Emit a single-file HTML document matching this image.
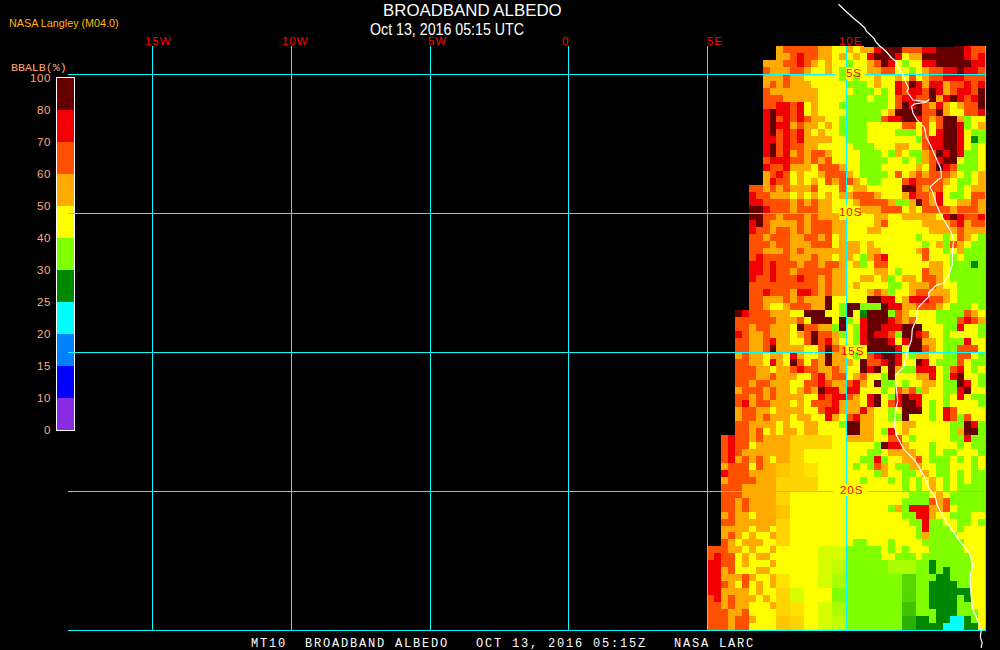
<!DOCTYPE html>
<html><head><meta charset="utf-8">
<style>
html,body{margin:0;padding:0;background:#000;}
body{width:1000px;height:650px;overflow:hidden;position:relative;font-family:"Liberation Sans",sans-serif;}
.t{position:absolute;white-space:pre;line-height:1;}
.m{font-family:"Liberation Mono",monospace;}
svg{position:absolute;left:0;top:0;}
</style></head><body>
<svg width="1000" height="650" viewBox="0 0 1000 650" shape-rendering="crispEdges">
<rect x="776" y="46" width="7" height="7" fill="#ffaa00"/>
<rect x="783" y="46" width="35" height="7" fill="#ff5000"/>
<rect x="818" y="46" width="14" height="7" fill="#ffaa00"/>
<rect x="832" y="46" width="14" height="7" fill="#ffff00"/>
<rect x="846" y="46" width="7" height="7" fill="#ffaa00"/>
<rect x="853" y="46" width="7" height="7" fill="#ffff00"/>
<rect x="860" y="46" width="14" height="7" fill="#ffaa00"/>
<rect x="874" y="46" width="7" height="7" fill="#f00000"/>
<rect x="881" y="46" width="21" height="7" fill="#660000"/>
<rect x="902" y="46" width="20" height="7" fill="#ff5000"/>
<rect x="922" y="46" width="14" height="7" fill="#f00000"/>
<rect x="936" y="46" width="28" height="7" fill="#660000"/>
<rect x="964" y="46" width="7" height="7" fill="#f00000"/>
<rect x="971" y="46" width="14" height="7" fill="#ff5000"/>
<rect x="776" y="53" width="14" height="7" fill="#ffaa00"/>
<rect x="790" y="53" width="7" height="7" fill="#ff5000"/>
<rect x="797" y="53" width="7" height="7" fill="#f00000"/>
<rect x="804" y="53" width="14" height="7" fill="#ff5000"/>
<rect x="818" y="53" width="14" height="7" fill="#ffaa00"/>
<rect x="832" y="53" width="7" height="7" fill="#ffff00"/>
<rect x="839" y="53" width="7" height="7" fill="#ffaa00"/>
<rect x="846" y="53" width="7" height="7" fill="#ffff00"/>
<rect x="853" y="53" width="7" height="7" fill="#ffaa00"/>
<rect x="860" y="53" width="7" height="7" fill="#ffff00"/>
<rect x="867" y="53" width="7" height="7" fill="#f00000"/>
<rect x="874" y="53" width="21" height="7" fill="#660000"/>
<rect x="895" y="53" width="7" height="7" fill="#f00000"/>
<rect x="902" y="53" width="7" height="7" fill="#ffff00"/>
<rect x="909" y="53" width="13" height="7" fill="#ffaa00"/>
<rect x="922" y="53" width="42" height="7" fill="#660000"/>
<rect x="964" y="53" width="7" height="7" fill="#f00000"/>
<rect x="971" y="53" width="7" height="7" fill="#ff5000"/>
<rect x="978" y="53" width="7" height="7" fill="#f00000"/>
<rect x="763" y="60" width="20" height="7" fill="#ffaa00"/>
<rect x="783" y="60" width="14" height="7" fill="#ff5000"/>
<rect x="797" y="60" width="7" height="7" fill="#f00000"/>
<rect x="804" y="60" width="7" height="7" fill="#ff5000"/>
<rect x="811" y="60" width="7" height="7" fill="#ffaa00"/>
<rect x="818" y="60" width="7" height="7" fill="#ffff00"/>
<rect x="825" y="60" width="7" height="7" fill="#ffaa00"/>
<rect x="832" y="60" width="14" height="7" fill="#ffff00"/>
<rect x="846" y="60" width="7" height="7" fill="#80ff00"/>
<rect x="853" y="60" width="14" height="7" fill="#ffff00"/>
<rect x="867" y="60" width="7" height="7" fill="#ffaa00"/>
<rect x="874" y="60" width="7" height="7" fill="#ff5000"/>
<rect x="881" y="60" width="7" height="7" fill="#660000"/>
<rect x="888" y="60" width="7" height="7" fill="#f00000"/>
<rect x="895" y="60" width="7" height="7" fill="#ffff00"/>
<rect x="902" y="60" width="7" height="7" fill="#80ff00"/>
<rect x="909" y="60" width="13" height="7" fill="#ffff00"/>
<rect x="922" y="60" width="14" height="7" fill="#f00000"/>
<rect x="936" y="60" width="35" height="7" fill="#660000"/>
<rect x="971" y="60" width="14" height="7" fill="#f00000"/>
<rect x="763" y="67" width="7" height="7" fill="#ff5000"/>
<rect x="770" y="67" width="20" height="7" fill="#ffaa00"/>
<rect x="790" y="67" width="14" height="7" fill="#ff5000"/>
<rect x="804" y="67" width="7" height="7" fill="#ffaa00"/>
<rect x="811" y="67" width="14" height="7" fill="#ffff00"/>
<rect x="825" y="67" width="7" height="7" fill="#ffaa00"/>
<rect x="832" y="67" width="7" height="7" fill="#ffff00"/>
<rect x="839" y="67" width="7" height="7" fill="#80ff00"/>
<rect x="846" y="67" width="21" height="7" fill="#ffff00"/>
<rect x="867" y="67" width="14" height="7" fill="#ffaa00"/>
<rect x="881" y="67" width="14" height="7" fill="#ff5000"/>
<rect x="895" y="67" width="14" height="7" fill="#ffff00"/>
<rect x="909" y="67" width="7" height="7" fill="#80ff00"/>
<rect x="916" y="67" width="6" height="7" fill="#ffff00"/>
<rect x="922" y="67" width="7" height="7" fill="#ffaa00"/>
<rect x="929" y="67" width="14" height="7" fill="#ff5000"/>
<rect x="943" y="67" width="14" height="7" fill="#f00000"/>
<rect x="957" y="67" width="7" height="7" fill="#660000"/>
<rect x="964" y="67" width="14" height="7" fill="#f00000"/>
<rect x="978" y="67" width="7" height="7" fill="#ff5000"/>
<rect x="763" y="74" width="20" height="7" fill="#ffaa00"/>
<rect x="783" y="74" width="7" height="7" fill="#ff5000"/>
<rect x="790" y="74" width="14" height="7" fill="#ffaa00"/>
<rect x="804" y="74" width="35" height="7" fill="#ffff00"/>
<rect x="839" y="74" width="7" height="7" fill="#80ff00"/>
<rect x="846" y="74" width="7" height="7" fill="#ffff00"/>
<rect x="853" y="74" width="7" height="7" fill="#80ff00"/>
<rect x="860" y="74" width="14" height="7" fill="#ffff00"/>
<rect x="874" y="74" width="7" height="7" fill="#ffaa00"/>
<rect x="881" y="74" width="14" height="7" fill="#ffff00"/>
<rect x="895" y="74" width="7" height="7" fill="#ffaa00"/>
<rect x="902" y="74" width="7" height="7" fill="#ffff00"/>
<rect x="909" y="74" width="7" height="7" fill="#ff5000"/>
<rect x="916" y="74" width="6" height="7" fill="#ffff00"/>
<rect x="922" y="74" width="7" height="7" fill="#ffaa00"/>
<rect x="929" y="74" width="14" height="7" fill="#ff5000"/>
<rect x="943" y="74" width="21" height="7" fill="#f00000"/>
<rect x="964" y="74" width="21" height="7" fill="#ff5000"/>
<rect x="763" y="81" width="7" height="7" fill="#ffaa00"/>
<rect x="770" y="81" width="6" height="7" fill="#ff5000"/>
<rect x="776" y="81" width="7" height="7" fill="#ffaa00"/>
<rect x="783" y="81" width="7" height="7" fill="#ff5000"/>
<rect x="790" y="81" width="21" height="7" fill="#ffaa00"/>
<rect x="811" y="81" width="35" height="7" fill="#ffff00"/>
<rect x="846" y="81" width="21" height="7" fill="#80ff00"/>
<rect x="867" y="81" width="7" height="7" fill="#ffff00"/>
<rect x="874" y="81" width="7" height="7" fill="#ffaa00"/>
<rect x="881" y="81" width="14" height="7" fill="#ffff00"/>
<rect x="895" y="81" width="7" height="7" fill="#f00000"/>
<rect x="902" y="81" width="7" height="7" fill="#ff5000"/>
<rect x="909" y="81" width="7" height="7" fill="#660000"/>
<rect x="916" y="81" width="6" height="7" fill="#f00000"/>
<rect x="922" y="81" width="7" height="7" fill="#ffaa00"/>
<rect x="929" y="81" width="14" height="7" fill="#f00000"/>
<rect x="943" y="81" width="7" height="7" fill="#ffaa00"/>
<rect x="950" y="81" width="14" height="7" fill="#ff5000"/>
<rect x="964" y="81" width="7" height="7" fill="#f00000"/>
<rect x="971" y="81" width="7" height="7" fill="#ff5000"/>
<rect x="978" y="81" width="7" height="7" fill="#f00000"/>
<rect x="763" y="88" width="7" height="7" fill="#ff5000"/>
<rect x="770" y="88" width="48" height="7" fill="#ffaa00"/>
<rect x="818" y="88" width="35" height="7" fill="#ffff00"/>
<rect x="853" y="88" width="21" height="7" fill="#80ff00"/>
<rect x="874" y="88" width="7" height="7" fill="#ffff00"/>
<rect x="881" y="88" width="7" height="7" fill="#80ff00"/>
<rect x="888" y="88" width="7" height="7" fill="#ffff00"/>
<rect x="895" y="88" width="7" height="7" fill="#f00000"/>
<rect x="902" y="88" width="7" height="7" fill="#ff5000"/>
<rect x="909" y="88" width="13" height="7" fill="#f00000"/>
<rect x="922" y="88" width="7" height="7" fill="#ff5000"/>
<rect x="929" y="88" width="7" height="7" fill="#660000"/>
<rect x="936" y="88" width="7" height="7" fill="#f00000"/>
<rect x="943" y="88" width="7" height="7" fill="#ffaa00"/>
<rect x="950" y="88" width="7" height="7" fill="#ff5000"/>
<rect x="957" y="88" width="14" height="7" fill="#f00000"/>
<rect x="971" y="88" width="7" height="7" fill="#ff5000"/>
<rect x="978" y="88" width="7" height="7" fill="#660000"/>
<rect x="763" y="95" width="20" height="7" fill="#ff5000"/>
<rect x="783" y="95" width="35" height="7" fill="#ffaa00"/>
<rect x="818" y="95" width="28" height="7" fill="#ffff00"/>
<rect x="846" y="95" width="21" height="7" fill="#80ff00"/>
<rect x="867" y="95" width="7" height="7" fill="#ffff00"/>
<rect x="874" y="95" width="14" height="7" fill="#80ff00"/>
<rect x="888" y="95" width="7" height="7" fill="#ffff00"/>
<rect x="895" y="95" width="7" height="7" fill="#ff5000"/>
<rect x="902" y="95" width="14" height="7" fill="#f00000"/>
<rect x="916" y="95" width="13" height="7" fill="#ff5000"/>
<rect x="929" y="95" width="7" height="7" fill="#660000"/>
<rect x="936" y="95" width="7" height="7" fill="#ffaa00"/>
<rect x="943" y="95" width="7" height="7" fill="#f00000"/>
<rect x="950" y="95" width="7" height="7" fill="#660000"/>
<rect x="957" y="95" width="7" height="7" fill="#f00000"/>
<rect x="964" y="95" width="7" height="7" fill="#ff5000"/>
<rect x="971" y="95" width="7" height="7" fill="#f00000"/>
<rect x="978" y="95" width="7" height="7" fill="#660000"/>
<rect x="763" y="102" width="13" height="7" fill="#ff5000"/>
<rect x="776" y="102" width="14" height="7" fill="#f00000"/>
<rect x="790" y="102" width="7" height="7" fill="#ff5000"/>
<rect x="797" y="102" width="7" height="7" fill="#f00000"/>
<rect x="804" y="102" width="7" height="7" fill="#ffff00"/>
<rect x="811" y="102" width="7" height="7" fill="#ffaa00"/>
<rect x="818" y="102" width="21" height="7" fill="#ffff00"/>
<rect x="839" y="102" width="49" height="7" fill="#80ff00"/>
<rect x="888" y="102" width="7" height="7" fill="#ffff00"/>
<rect x="895" y="102" width="7" height="7" fill="#ff5000"/>
<rect x="902" y="102" width="7" height="7" fill="#660000"/>
<rect x="909" y="102" width="7" height="7" fill="#f00000"/>
<rect x="916" y="102" width="6" height="7" fill="#660000"/>
<rect x="922" y="102" width="7" height="7" fill="#ff5000"/>
<rect x="929" y="102" width="7" height="7" fill="#ffaa00"/>
<rect x="936" y="102" width="7" height="7" fill="#f00000"/>
<rect x="943" y="102" width="7" height="7" fill="#ffaa00"/>
<rect x="950" y="102" width="7" height="7" fill="#ffff00"/>
<rect x="957" y="102" width="7" height="7" fill="#ffaa00"/>
<rect x="964" y="102" width="14" height="7" fill="#ff5000"/>
<rect x="978" y="102" width="7" height="7" fill="#660000"/>
<rect x="763" y="109" width="7" height="7" fill="#f00000"/>
<rect x="770" y="109" width="6" height="7" fill="#660000"/>
<rect x="776" y="109" width="14" height="7" fill="#f00000"/>
<rect x="790" y="109" width="7" height="7" fill="#ff5000"/>
<rect x="797" y="109" width="7" height="7" fill="#f00000"/>
<rect x="804" y="109" width="7" height="7" fill="#ffff00"/>
<rect x="811" y="109" width="7" height="7" fill="#ffaa00"/>
<rect x="818" y="109" width="28" height="7" fill="#ffff00"/>
<rect x="846" y="109" width="35" height="7" fill="#80ff00"/>
<rect x="881" y="109" width="7" height="7" fill="#ffff00"/>
<rect x="888" y="109" width="7" height="7" fill="#ffaa00"/>
<rect x="895" y="109" width="27" height="7" fill="#660000"/>
<rect x="922" y="109" width="14" height="7" fill="#ff5000"/>
<rect x="936" y="109" width="7" height="7" fill="#660000"/>
<rect x="943" y="109" width="7" height="7" fill="#ffaa00"/>
<rect x="950" y="109" width="14" height="7" fill="#ffff00"/>
<rect x="964" y="109" width="14" height="7" fill="#ff5000"/>
<rect x="978" y="109" width="7" height="7" fill="#f00000"/>
<rect x="763" y="116" width="7" height="6" fill="#f00000"/>
<rect x="770" y="116" width="6" height="6" fill="#660000"/>
<rect x="776" y="116" width="7" height="6" fill="#ff5000"/>
<rect x="783" y="116" width="7" height="6" fill="#f00000"/>
<rect x="790" y="116" width="7" height="6" fill="#ff5000"/>
<rect x="797" y="116" width="7" height="6" fill="#f00000"/>
<rect x="804" y="116" width="7" height="6" fill="#ff5000"/>
<rect x="811" y="116" width="14" height="6" fill="#ffaa00"/>
<rect x="825" y="116" width="14" height="6" fill="#ffff00"/>
<rect x="839" y="116" width="42" height="6" fill="#80ff00"/>
<rect x="881" y="116" width="7" height="6" fill="#ff5000"/>
<rect x="888" y="116" width="14" height="6" fill="#f00000"/>
<rect x="902" y="116" width="14" height="6" fill="#660000"/>
<rect x="916" y="116" width="6" height="6" fill="#f00000"/>
<rect x="922" y="116" width="7" height="6" fill="#ff5000"/>
<rect x="929" y="116" width="7" height="6" fill="#ffaa00"/>
<rect x="936" y="116" width="7" height="6" fill="#ff5000"/>
<rect x="943" y="116" width="14" height="6" fill="#660000"/>
<rect x="957" y="116" width="7" height="6" fill="#ffaa00"/>
<rect x="964" y="116" width="7" height="6" fill="#80ff00"/>
<rect x="971" y="116" width="14" height="6" fill="#ffff00"/>
<rect x="763" y="122" width="7" height="7" fill="#f00000"/>
<rect x="770" y="122" width="6" height="7" fill="#660000"/>
<rect x="776" y="122" width="14" height="7" fill="#f00000"/>
<rect x="790" y="122" width="7" height="7" fill="#ffaa00"/>
<rect x="797" y="122" width="7" height="7" fill="#ff5000"/>
<rect x="804" y="122" width="14" height="7" fill="#ffaa00"/>
<rect x="818" y="122" width="7" height="7" fill="#ffff00"/>
<rect x="825" y="122" width="7" height="7" fill="#ffaa00"/>
<rect x="832" y="122" width="7" height="7" fill="#ffff00"/>
<rect x="839" y="122" width="28" height="7" fill="#80ff00"/>
<rect x="867" y="122" width="35" height="7" fill="#ffff00"/>
<rect x="902" y="122" width="14" height="7" fill="#ff5000"/>
<rect x="916" y="122" width="6" height="7" fill="#ffff00"/>
<rect x="922" y="122" width="7" height="7" fill="#ff5000"/>
<rect x="929" y="122" width="7" height="7" fill="#ffff00"/>
<rect x="936" y="122" width="7" height="7" fill="#ff5000"/>
<rect x="943" y="122" width="14" height="7" fill="#660000"/>
<rect x="957" y="122" width="7" height="7" fill="#f00000"/>
<rect x="964" y="122" width="7" height="7" fill="#80ff00"/>
<rect x="971" y="122" width="7" height="7" fill="#ffff00"/>
<rect x="978" y="122" width="7" height="7" fill="#ffaa00"/>
<rect x="763" y="129" width="7" height="7" fill="#f00000"/>
<rect x="770" y="129" width="6" height="7" fill="#660000"/>
<rect x="776" y="129" width="7" height="7" fill="#ff5000"/>
<rect x="783" y="129" width="7" height="7" fill="#f00000"/>
<rect x="790" y="129" width="7" height="7" fill="#ff5000"/>
<rect x="797" y="129" width="7" height="7" fill="#f00000"/>
<rect x="804" y="129" width="7" height="7" fill="#ffaa00"/>
<rect x="811" y="129" width="7" height="7" fill="#ffff00"/>
<rect x="818" y="129" width="7" height="7" fill="#ffaa00"/>
<rect x="825" y="129" width="14" height="7" fill="#ffff00"/>
<rect x="839" y="129" width="28" height="7" fill="#80ff00"/>
<rect x="867" y="129" width="28" height="7" fill="#ffff00"/>
<rect x="895" y="129" width="21" height="7" fill="#80ff00"/>
<rect x="916" y="129" width="6" height="7" fill="#ffff00"/>
<rect x="922" y="129" width="7" height="7" fill="#ff5000"/>
<rect x="929" y="129" width="7" height="7" fill="#ffff00"/>
<rect x="936" y="129" width="7" height="7" fill="#f00000"/>
<rect x="943" y="129" width="14" height="7" fill="#660000"/>
<rect x="957" y="129" width="7" height="7" fill="#f00000"/>
<rect x="964" y="129" width="7" height="7" fill="#ffff00"/>
<rect x="971" y="129" width="14" height="7" fill="#80ff00"/>
<rect x="763" y="136" width="13" height="7" fill="#f00000"/>
<rect x="776" y="136" width="7" height="7" fill="#ff5000"/>
<rect x="783" y="136" width="7" height="7" fill="#f00000"/>
<rect x="790" y="136" width="7" height="7" fill="#ff5000"/>
<rect x="797" y="136" width="7" height="7" fill="#f00000"/>
<rect x="804" y="136" width="28" height="7" fill="#ffaa00"/>
<rect x="832" y="136" width="14" height="7" fill="#ffff00"/>
<rect x="846" y="136" width="21" height="7" fill="#80ff00"/>
<rect x="867" y="136" width="49" height="7" fill="#ffff00"/>
<rect x="916" y="136" width="6" height="7" fill="#80ff00"/>
<rect x="922" y="136" width="7" height="7" fill="#ff5000"/>
<rect x="929" y="136" width="14" height="7" fill="#f00000"/>
<rect x="943" y="136" width="14" height="7" fill="#660000"/>
<rect x="957" y="136" width="7" height="7" fill="#f00000"/>
<rect x="964" y="136" width="7" height="7" fill="#ffff00"/>
<rect x="971" y="136" width="7" height="7" fill="#008800"/>
<rect x="978" y="136" width="7" height="7" fill="#80ff00"/>
<rect x="763" y="143" width="7" height="7" fill="#f00000"/>
<rect x="770" y="143" width="6" height="7" fill="#660000"/>
<rect x="776" y="143" width="7" height="7" fill="#ff5000"/>
<rect x="783" y="143" width="7" height="7" fill="#f00000"/>
<rect x="790" y="143" width="14" height="7" fill="#ff5000"/>
<rect x="804" y="143" width="14" height="7" fill="#ffaa00"/>
<rect x="818" y="143" width="35" height="7" fill="#ffff00"/>
<rect x="853" y="143" width="21" height="7" fill="#80ff00"/>
<rect x="874" y="143" width="21" height="7" fill="#ffff00"/>
<rect x="895" y="143" width="14" height="7" fill="#ffaa00"/>
<rect x="909" y="143" width="13" height="7" fill="#ffff00"/>
<rect x="922" y="143" width="7" height="7" fill="#ff5000"/>
<rect x="929" y="143" width="14" height="7" fill="#f00000"/>
<rect x="943" y="143" width="14" height="7" fill="#660000"/>
<rect x="957" y="143" width="7" height="7" fill="#f00000"/>
<rect x="964" y="143" width="7" height="7" fill="#ffff00"/>
<rect x="971" y="143" width="7" height="7" fill="#80ff00"/>
<rect x="978" y="143" width="7" height="7" fill="#ffff00"/>
<rect x="763" y="150" width="7" height="7" fill="#f00000"/>
<rect x="770" y="150" width="6" height="7" fill="#660000"/>
<rect x="776" y="150" width="7" height="7" fill="#ff5000"/>
<rect x="783" y="150" width="7" height="7" fill="#f00000"/>
<rect x="790" y="150" width="7" height="7" fill="#ffaa00"/>
<rect x="797" y="150" width="7" height="7" fill="#ff5000"/>
<rect x="804" y="150" width="7" height="7" fill="#ffaa00"/>
<rect x="811" y="150" width="14" height="7" fill="#ff5000"/>
<rect x="825" y="150" width="7" height="7" fill="#ffaa00"/>
<rect x="832" y="150" width="28" height="7" fill="#ffff00"/>
<rect x="860" y="150" width="21" height="7" fill="#80ff00"/>
<rect x="881" y="150" width="7" height="7" fill="#ffff00"/>
<rect x="888" y="150" width="7" height="7" fill="#80ff00"/>
<rect x="895" y="150" width="7" height="7" fill="#ffaa00"/>
<rect x="902" y="150" width="7" height="7" fill="#ffff00"/>
<rect x="909" y="150" width="13" height="7" fill="#80ff00"/>
<rect x="922" y="150" width="7" height="7" fill="#ffaa00"/>
<rect x="929" y="150" width="7" height="7" fill="#ff5000"/>
<rect x="936" y="150" width="7" height="7" fill="#660000"/>
<rect x="943" y="150" width="7" height="7" fill="#f00000"/>
<rect x="950" y="150" width="7" height="7" fill="#660000"/>
<rect x="957" y="150" width="7" height="7" fill="#f00000"/>
<rect x="964" y="150" width="14" height="7" fill="#80ff00"/>
<rect x="978" y="150" width="7" height="7" fill="#ffff00"/>
<rect x="763" y="157" width="7" height="7" fill="#ff5000"/>
<rect x="770" y="157" width="20" height="7" fill="#f00000"/>
<rect x="790" y="157" width="14" height="7" fill="#ff5000"/>
<rect x="804" y="157" width="7" height="7" fill="#ffaa00"/>
<rect x="811" y="157" width="7" height="7" fill="#ff5000"/>
<rect x="818" y="157" width="7" height="7" fill="#ffaa00"/>
<rect x="825" y="157" width="7" height="7" fill="#ff5000"/>
<rect x="832" y="157" width="28" height="7" fill="#ffff00"/>
<rect x="860" y="157" width="28" height="7" fill="#80ff00"/>
<rect x="888" y="157" width="14" height="7" fill="#ffff00"/>
<rect x="902" y="157" width="7" height="7" fill="#80ff00"/>
<rect x="909" y="157" width="7" height="7" fill="#ffff00"/>
<rect x="916" y="157" width="6" height="7" fill="#80ff00"/>
<rect x="922" y="157" width="7" height="7" fill="#ffaa00"/>
<rect x="929" y="157" width="7" height="7" fill="#ff5000"/>
<rect x="936" y="157" width="7" height="7" fill="#f00000"/>
<rect x="943" y="157" width="14" height="7" fill="#660000"/>
<rect x="957" y="157" width="7" height="7" fill="#ffff00"/>
<rect x="964" y="157" width="14" height="7" fill="#80ff00"/>
<rect x="978" y="157" width="7" height="7" fill="#ffff00"/>
<rect x="763" y="164" width="7" height="7" fill="#f00000"/>
<rect x="770" y="164" width="13" height="7" fill="#ff5000"/>
<rect x="783" y="164" width="7" height="7" fill="#f00000"/>
<rect x="790" y="164" width="21" height="7" fill="#ffaa00"/>
<rect x="811" y="164" width="7" height="7" fill="#ffff00"/>
<rect x="818" y="164" width="21" height="7" fill="#ff5000"/>
<rect x="839" y="164" width="7" height="7" fill="#ffaa00"/>
<rect x="846" y="164" width="14" height="7" fill="#ffff00"/>
<rect x="860" y="164" width="21" height="7" fill="#80ff00"/>
<rect x="881" y="164" width="35" height="7" fill="#ffff00"/>
<rect x="916" y="164" width="6" height="7" fill="#ffaa00"/>
<rect x="922" y="164" width="7" height="7" fill="#ffff00"/>
<rect x="929" y="164" width="7" height="7" fill="#ff5000"/>
<rect x="936" y="164" width="7" height="7" fill="#660000"/>
<rect x="943" y="164" width="7" height="7" fill="#f00000"/>
<rect x="950" y="164" width="7" height="7" fill="#ff5000"/>
<rect x="957" y="164" width="21" height="7" fill="#80ff00"/>
<rect x="978" y="164" width="7" height="7" fill="#ffff00"/>
<rect x="763" y="171" width="7" height="7" fill="#ffaa00"/>
<rect x="770" y="171" width="6" height="7" fill="#ff5000"/>
<rect x="776" y="171" width="7" height="7" fill="#f00000"/>
<rect x="783" y="171" width="7" height="7" fill="#ff5000"/>
<rect x="790" y="171" width="7" height="7" fill="#ffff00"/>
<rect x="797" y="171" width="7" height="7" fill="#ffaa00"/>
<rect x="804" y="171" width="14" height="7" fill="#ffff00"/>
<rect x="818" y="171" width="7" height="7" fill="#ffaa00"/>
<rect x="825" y="171" width="21" height="7" fill="#ff5000"/>
<rect x="846" y="171" width="7" height="7" fill="#ffaa00"/>
<rect x="853" y="171" width="7" height="7" fill="#ffff00"/>
<rect x="860" y="171" width="28" height="7" fill="#80ff00"/>
<rect x="888" y="171" width="7" height="7" fill="#ffff00"/>
<rect x="895" y="171" width="7" height="7" fill="#ff5000"/>
<rect x="902" y="171" width="7" height="7" fill="#ffff00"/>
<rect x="909" y="171" width="7" height="7" fill="#ffaa00"/>
<rect x="916" y="171" width="6" height="7" fill="#ff5000"/>
<rect x="922" y="171" width="7" height="7" fill="#ffaa00"/>
<rect x="929" y="171" width="21" height="7" fill="#ff5000"/>
<rect x="950" y="171" width="7" height="7" fill="#ffaa00"/>
<rect x="957" y="171" width="7" height="7" fill="#ffff00"/>
<rect x="964" y="171" width="7" height="7" fill="#80ff00"/>
<rect x="971" y="171" width="7" height="7" fill="#ffff00"/>
<rect x="978" y="171" width="7" height="7" fill="#ffaa00"/>
<rect x="763" y="178" width="7" height="7" fill="#ffaa00"/>
<rect x="770" y="178" width="6" height="7" fill="#f00000"/>
<rect x="776" y="178" width="14" height="7" fill="#ff5000"/>
<rect x="790" y="178" width="7" height="7" fill="#ffff00"/>
<rect x="797" y="178" width="7" height="7" fill="#ffaa00"/>
<rect x="804" y="178" width="7" height="7" fill="#ffff00"/>
<rect x="811" y="178" width="7" height="7" fill="#ffaa00"/>
<rect x="818" y="178" width="7" height="7" fill="#ffff00"/>
<rect x="825" y="178" width="7" height="7" fill="#ff5000"/>
<rect x="832" y="178" width="7" height="7" fill="#ffaa00"/>
<rect x="839" y="178" width="14" height="7" fill="#ff5000"/>
<rect x="853" y="178" width="7" height="7" fill="#ffaa00"/>
<rect x="860" y="178" width="7" height="7" fill="#ffff00"/>
<rect x="867" y="178" width="14" height="7" fill="#80ff00"/>
<rect x="881" y="178" width="21" height="7" fill="#ffff00"/>
<rect x="902" y="178" width="7" height="7" fill="#ff5000"/>
<rect x="909" y="178" width="7" height="7" fill="#f00000"/>
<rect x="916" y="178" width="27" height="7" fill="#ff5000"/>
<rect x="943" y="178" width="7" height="7" fill="#ffaa00"/>
<rect x="950" y="178" width="7" height="7" fill="#ffff00"/>
<rect x="957" y="178" width="14" height="7" fill="#80ff00"/>
<rect x="971" y="178" width="7" height="7" fill="#ffff00"/>
<rect x="978" y="178" width="7" height="7" fill="#ffaa00"/>
<rect x="749" y="185" width="14" height="7" fill="#ff5000"/>
<rect x="763" y="185" width="7" height="7" fill="#ffaa00"/>
<rect x="770" y="185" width="6" height="7" fill="#ff5000"/>
<rect x="776" y="185" width="7" height="7" fill="#ffaa00"/>
<rect x="783" y="185" width="7" height="7" fill="#ff5000"/>
<rect x="790" y="185" width="21" height="7" fill="#ffaa00"/>
<rect x="811" y="185" width="7" height="7" fill="#ff5000"/>
<rect x="818" y="185" width="21" height="7" fill="#ffff00"/>
<rect x="839" y="185" width="7" height="7" fill="#ff5000"/>
<rect x="846" y="185" width="7" height="7" fill="#ffff00"/>
<rect x="853" y="185" width="14" height="7" fill="#ffaa00"/>
<rect x="867" y="185" width="35" height="7" fill="#ffff00"/>
<rect x="902" y="185" width="14" height="7" fill="#660000"/>
<rect x="916" y="185" width="6" height="7" fill="#ff5000"/>
<rect x="922" y="185" width="7" height="7" fill="#ffaa00"/>
<rect x="929" y="185" width="14" height="7" fill="#ff5000"/>
<rect x="943" y="185" width="14" height="7" fill="#ffff00"/>
<rect x="957" y="185" width="7" height="7" fill="#80ff00"/>
<rect x="964" y="185" width="7" height="7" fill="#ffff00"/>
<rect x="971" y="185" width="14" height="7" fill="#ffaa00"/>
<rect x="749" y="192" width="7" height="7" fill="#f00000"/>
<rect x="756" y="192" width="14" height="7" fill="#ff5000"/>
<rect x="770" y="192" width="20" height="7" fill="#ffaa00"/>
<rect x="790" y="192" width="7" height="7" fill="#ffff00"/>
<rect x="797" y="192" width="7" height="7" fill="#ffaa00"/>
<rect x="804" y="192" width="7" height="7" fill="#ffff00"/>
<rect x="811" y="192" width="7" height="7" fill="#ffaa00"/>
<rect x="818" y="192" width="7" height="7" fill="#ffff00"/>
<rect x="825" y="192" width="7" height="7" fill="#ffaa00"/>
<rect x="832" y="192" width="7" height="7" fill="#ffff00"/>
<rect x="839" y="192" width="14" height="7" fill="#ffaa00"/>
<rect x="853" y="192" width="21" height="7" fill="#ff5000"/>
<rect x="874" y="192" width="7" height="7" fill="#ffaa00"/>
<rect x="881" y="192" width="21" height="7" fill="#ffff00"/>
<rect x="902" y="192" width="7" height="7" fill="#ffaa00"/>
<rect x="909" y="192" width="7" height="7" fill="#f00000"/>
<rect x="916" y="192" width="13" height="7" fill="#ff5000"/>
<rect x="929" y="192" width="7" height="7" fill="#ffaa00"/>
<rect x="936" y="192" width="7" height="7" fill="#f00000"/>
<rect x="943" y="192" width="7" height="7" fill="#ffff00"/>
<rect x="950" y="192" width="14" height="7" fill="#80ff00"/>
<rect x="964" y="192" width="7" height="7" fill="#ffff00"/>
<rect x="971" y="192" width="14" height="7" fill="#ff5000"/>
<rect x="749" y="199" width="14" height="7" fill="#f00000"/>
<rect x="763" y="199" width="27" height="7" fill="#ff5000"/>
<rect x="790" y="199" width="7" height="7" fill="#ffaa00"/>
<rect x="797" y="199" width="7" height="7" fill="#ff5000"/>
<rect x="804" y="199" width="7" height="7" fill="#ffaa00"/>
<rect x="811" y="199" width="7" height="7" fill="#ff5000"/>
<rect x="818" y="199" width="14" height="7" fill="#ffaa00"/>
<rect x="832" y="199" width="21" height="7" fill="#ffff00"/>
<rect x="853" y="199" width="7" height="7" fill="#ffaa00"/>
<rect x="860" y="199" width="28" height="7" fill="#ff5000"/>
<rect x="888" y="199" width="7" height="7" fill="#ffaa00"/>
<rect x="895" y="199" width="14" height="7" fill="#80ff00"/>
<rect x="909" y="199" width="7" height="7" fill="#ffaa00"/>
<rect x="916" y="199" width="6" height="7" fill="#660000"/>
<rect x="922" y="199" width="7" height="7" fill="#ff5000"/>
<rect x="929" y="199" width="7" height="7" fill="#ffaa00"/>
<rect x="936" y="199" width="7" height="7" fill="#f00000"/>
<rect x="943" y="199" width="14" height="7" fill="#ffff00"/>
<rect x="957" y="199" width="14" height="7" fill="#ffaa00"/>
<rect x="971" y="199" width="7" height="7" fill="#ff5000"/>
<rect x="978" y="199" width="7" height="7" fill="#ffaa00"/>
<rect x="749" y="206" width="14" height="7" fill="#660000"/>
<rect x="763" y="206" width="7" height="7" fill="#f00000"/>
<rect x="770" y="206" width="20" height="7" fill="#ff5000"/>
<rect x="790" y="206" width="7" height="7" fill="#ffaa00"/>
<rect x="797" y="206" width="21" height="7" fill="#ff5000"/>
<rect x="818" y="206" width="14" height="7" fill="#ffaa00"/>
<rect x="832" y="206" width="28" height="7" fill="#ffff00"/>
<rect x="860" y="206" width="21" height="7" fill="#ffaa00"/>
<rect x="881" y="206" width="21" height="7" fill="#ff5000"/>
<rect x="902" y="206" width="7" height="7" fill="#ffff00"/>
<rect x="909" y="206" width="7" height="7" fill="#ffaa00"/>
<rect x="916" y="206" width="6" height="7" fill="#ffff00"/>
<rect x="922" y="206" width="28" height="7" fill="#ff5000"/>
<rect x="950" y="206" width="7" height="7" fill="#ffaa00"/>
<rect x="957" y="206" width="21" height="7" fill="#ff5000"/>
<rect x="978" y="206" width="7" height="7" fill="#ffaa00"/>
<rect x="749" y="213" width="14" height="7" fill="#660000"/>
<rect x="763" y="213" width="13" height="7" fill="#ff5000"/>
<rect x="776" y="213" width="7" height="7" fill="#ffaa00"/>
<rect x="783" y="213" width="21" height="7" fill="#ff5000"/>
<rect x="804" y="213" width="7" height="7" fill="#ffaa00"/>
<rect x="811" y="213" width="7" height="7" fill="#ff5000"/>
<rect x="818" y="213" width="21" height="7" fill="#ffaa00"/>
<rect x="839" y="213" width="35" height="7" fill="#ffff00"/>
<rect x="874" y="213" width="14" height="7" fill="#ffaa00"/>
<rect x="888" y="213" width="14" height="7" fill="#ffff00"/>
<rect x="902" y="213" width="34" height="7" fill="#ffaa00"/>
<rect x="936" y="213" width="7" height="7" fill="#ffff00"/>
<rect x="943" y="213" width="7" height="7" fill="#f00000"/>
<rect x="950" y="213" width="7" height="7" fill="#660000"/>
<rect x="957" y="213" width="7" height="7" fill="#f00000"/>
<rect x="964" y="213" width="14" height="7" fill="#ff5000"/>
<rect x="978" y="213" width="7" height="7" fill="#f00000"/>
<rect x="749" y="220" width="7" height="7" fill="#f00000"/>
<rect x="756" y="220" width="7" height="7" fill="#660000"/>
<rect x="763" y="220" width="7" height="7" fill="#ff5000"/>
<rect x="770" y="220" width="27" height="7" fill="#ffaa00"/>
<rect x="797" y="220" width="7" height="7" fill="#ff5000"/>
<rect x="804" y="220" width="7" height="7" fill="#ffaa00"/>
<rect x="811" y="220" width="21" height="7" fill="#ff5000"/>
<rect x="832" y="220" width="14" height="7" fill="#ffaa00"/>
<rect x="846" y="220" width="28" height="7" fill="#ffff00"/>
<rect x="874" y="220" width="7" height="7" fill="#ffaa00"/>
<rect x="881" y="220" width="7" height="7" fill="#ff5000"/>
<rect x="888" y="220" width="34" height="7" fill="#ffff00"/>
<rect x="922" y="220" width="28" height="7" fill="#ffaa00"/>
<rect x="950" y="220" width="7" height="7" fill="#ff5000"/>
<rect x="957" y="220" width="7" height="7" fill="#f00000"/>
<rect x="964" y="220" width="7" height="7" fill="#ffaa00"/>
<rect x="971" y="220" width="14" height="7" fill="#ff5000"/>
<rect x="749" y="227" width="7" height="7" fill="#f00000"/>
<rect x="756" y="227" width="14" height="7" fill="#ff5000"/>
<rect x="770" y="227" width="6" height="7" fill="#ffaa00"/>
<rect x="776" y="227" width="14" height="7" fill="#ff5000"/>
<rect x="790" y="227" width="7" height="7" fill="#ffaa00"/>
<rect x="797" y="227" width="7" height="7" fill="#ff5000"/>
<rect x="804" y="227" width="7" height="7" fill="#ffaa00"/>
<rect x="811" y="227" width="21" height="7" fill="#ff5000"/>
<rect x="832" y="227" width="14" height="7" fill="#ffaa00"/>
<rect x="846" y="227" width="21" height="7" fill="#ffff00"/>
<rect x="867" y="227" width="14" height="7" fill="#ffaa00"/>
<rect x="881" y="227" width="48" height="7" fill="#ffff00"/>
<rect x="929" y="227" width="28" height="7" fill="#ffaa00"/>
<rect x="957" y="227" width="7" height="7" fill="#ff5000"/>
<rect x="964" y="227" width="21" height="7" fill="#ffaa00"/>
<rect x="749" y="234" width="14" height="7" fill="#ff5000"/>
<rect x="763" y="234" width="7" height="7" fill="#ffaa00"/>
<rect x="770" y="234" width="20" height="7" fill="#ff5000"/>
<rect x="790" y="234" width="14" height="7" fill="#ffaa00"/>
<rect x="804" y="234" width="14" height="7" fill="#ff5000"/>
<rect x="818" y="234" width="7" height="7" fill="#ffaa00"/>
<rect x="825" y="234" width="7" height="7" fill="#ff5000"/>
<rect x="832" y="234" width="7" height="7" fill="#ffff00"/>
<rect x="839" y="234" width="7" height="7" fill="#ffaa00"/>
<rect x="846" y="234" width="70" height="7" fill="#ffff00"/>
<rect x="916" y="234" width="6" height="7" fill="#80ff00"/>
<rect x="922" y="234" width="21" height="7" fill="#ffff00"/>
<rect x="943" y="234" width="7" height="7" fill="#80ff00"/>
<rect x="950" y="234" width="7" height="7" fill="#ffff00"/>
<rect x="957" y="234" width="7" height="7" fill="#ff5000"/>
<rect x="964" y="234" width="7" height="7" fill="#ffaa00"/>
<rect x="971" y="234" width="7" height="7" fill="#ffff00"/>
<rect x="978" y="234" width="7" height="7" fill="#80ff00"/>
<rect x="749" y="241" width="21" height="7" fill="#ff5000"/>
<rect x="770" y="241" width="6" height="7" fill="#ffaa00"/>
<rect x="776" y="241" width="14" height="7" fill="#ff5000"/>
<rect x="790" y="241" width="21" height="7" fill="#ffaa00"/>
<rect x="811" y="241" width="21" height="7" fill="#ff5000"/>
<rect x="832" y="241" width="7" height="7" fill="#ffff00"/>
<rect x="839" y="241" width="21" height="7" fill="#ffaa00"/>
<rect x="860" y="241" width="7" height="7" fill="#ffff00"/>
<rect x="867" y="241" width="7" height="7" fill="#ffaa00"/>
<rect x="874" y="241" width="48" height="7" fill="#ffff00"/>
<rect x="922" y="241" width="7" height="7" fill="#80ff00"/>
<rect x="929" y="241" width="7" height="7" fill="#ffff00"/>
<rect x="936" y="241" width="7" height="7" fill="#ffaa00"/>
<rect x="943" y="241" width="7" height="7" fill="#80ff00"/>
<rect x="950" y="241" width="7" height="7" fill="#ff5000"/>
<rect x="957" y="241" width="7" height="7" fill="#ffaa00"/>
<rect x="964" y="241" width="7" height="7" fill="#ffff00"/>
<rect x="971" y="241" width="14" height="7" fill="#80ff00"/>
<rect x="749" y="248" width="14" height="6" fill="#ff5000"/>
<rect x="763" y="248" width="20" height="6" fill="#ffaa00"/>
<rect x="783" y="248" width="7" height="6" fill="#ff5000"/>
<rect x="790" y="248" width="7" height="6" fill="#ffaa00"/>
<rect x="797" y="248" width="7" height="6" fill="#ff5000"/>
<rect x="804" y="248" width="56" height="6" fill="#ffaa00"/>
<rect x="860" y="248" width="7" height="6" fill="#ffff00"/>
<rect x="867" y="248" width="14" height="6" fill="#ffaa00"/>
<rect x="881" y="248" width="35" height="6" fill="#ffff00"/>
<rect x="916" y="248" width="6" height="6" fill="#ffaa00"/>
<rect x="922" y="248" width="7" height="6" fill="#ff5000"/>
<rect x="929" y="248" width="14" height="6" fill="#ffff00"/>
<rect x="943" y="248" width="7" height="6" fill="#80ff00"/>
<rect x="950" y="248" width="7" height="6" fill="#ffff00"/>
<rect x="957" y="248" width="7" height="6" fill="#ffaa00"/>
<rect x="964" y="248" width="21" height="6" fill="#80ff00"/>
<rect x="749" y="254" width="7" height="7" fill="#ff5000"/>
<rect x="756" y="254" width="7" height="7" fill="#f00000"/>
<rect x="763" y="254" width="27" height="7" fill="#ff5000"/>
<rect x="790" y="254" width="21" height="7" fill="#ffaa00"/>
<rect x="811" y="254" width="7" height="7" fill="#ff5000"/>
<rect x="818" y="254" width="14" height="7" fill="#ffaa00"/>
<rect x="832" y="254" width="7" height="7" fill="#ffff00"/>
<rect x="839" y="254" width="14" height="7" fill="#ffaa00"/>
<rect x="853" y="254" width="7" height="7" fill="#ffff00"/>
<rect x="860" y="254" width="7" height="7" fill="#80ff00"/>
<rect x="867" y="254" width="7" height="7" fill="#ffaa00"/>
<rect x="874" y="254" width="7" height="7" fill="#ff5000"/>
<rect x="881" y="254" width="7" height="7" fill="#f00000"/>
<rect x="888" y="254" width="34" height="7" fill="#ffff00"/>
<rect x="922" y="254" width="7" height="7" fill="#ff5000"/>
<rect x="929" y="254" width="21" height="7" fill="#ffff00"/>
<rect x="950" y="254" width="7" height="7" fill="#80ff00"/>
<rect x="957" y="254" width="7" height="7" fill="#ffff00"/>
<rect x="964" y="254" width="21" height="7" fill="#80ff00"/>
<rect x="749" y="261" width="14" height="7" fill="#f00000"/>
<rect x="763" y="261" width="7" height="7" fill="#ff5000"/>
<rect x="770" y="261" width="6" height="7" fill="#f00000"/>
<rect x="776" y="261" width="21" height="7" fill="#ff5000"/>
<rect x="797" y="261" width="7" height="7" fill="#ffaa00"/>
<rect x="804" y="261" width="14" height="7" fill="#ff5000"/>
<rect x="818" y="261" width="7" height="7" fill="#ffaa00"/>
<rect x="825" y="261" width="14" height="7" fill="#ff5000"/>
<rect x="839" y="261" width="7" height="7" fill="#ffaa00"/>
<rect x="846" y="261" width="7" height="7" fill="#ffff00"/>
<rect x="853" y="261" width="7" height="7" fill="#ffaa00"/>
<rect x="860" y="261" width="7" height="7" fill="#80ff00"/>
<rect x="867" y="261" width="7" height="7" fill="#ffff00"/>
<rect x="874" y="261" width="14" height="7" fill="#ff5000"/>
<rect x="888" y="261" width="41" height="7" fill="#ffff00"/>
<rect x="929" y="261" width="14" height="7" fill="#ffaa00"/>
<rect x="943" y="261" width="7" height="7" fill="#ffff00"/>
<rect x="950" y="261" width="21" height="7" fill="#80ff00"/>
<rect x="971" y="261" width="7" height="7" fill="#008800"/>
<rect x="978" y="261" width="7" height="7" fill="#80ff00"/>
<rect x="749" y="268" width="14" height="7" fill="#f00000"/>
<rect x="763" y="268" width="7" height="7" fill="#ff5000"/>
<rect x="770" y="268" width="6" height="7" fill="#f00000"/>
<rect x="776" y="268" width="14" height="7" fill="#ff5000"/>
<rect x="790" y="268" width="7" height="7" fill="#ffaa00"/>
<rect x="797" y="268" width="35" height="7" fill="#ff5000"/>
<rect x="832" y="268" width="14" height="7" fill="#ffaa00"/>
<rect x="846" y="268" width="28" height="7" fill="#ffff00"/>
<rect x="874" y="268" width="14" height="7" fill="#ffaa00"/>
<rect x="888" y="268" width="7" height="7" fill="#ffff00"/>
<rect x="895" y="268" width="7" height="7" fill="#80ff00"/>
<rect x="902" y="268" width="20" height="7" fill="#ffff00"/>
<rect x="922" y="268" width="7" height="7" fill="#ff5000"/>
<rect x="929" y="268" width="14" height="7" fill="#ffaa00"/>
<rect x="943" y="268" width="7" height="7" fill="#ffff00"/>
<rect x="950" y="268" width="35" height="7" fill="#80ff00"/>
<rect x="749" y="275" width="7" height="7" fill="#f00000"/>
<rect x="756" y="275" width="14" height="7" fill="#ff5000"/>
<rect x="770" y="275" width="6" height="7" fill="#f00000"/>
<rect x="776" y="275" width="21" height="7" fill="#ff5000"/>
<rect x="797" y="275" width="7" height="7" fill="#f00000"/>
<rect x="804" y="275" width="14" height="7" fill="#ff5000"/>
<rect x="818" y="275" width="7" height="7" fill="#ffaa00"/>
<rect x="825" y="275" width="7" height="7" fill="#ff5000"/>
<rect x="832" y="275" width="14" height="7" fill="#ffaa00"/>
<rect x="846" y="275" width="14" height="7" fill="#ffff00"/>
<rect x="860" y="275" width="14" height="7" fill="#ffaa00"/>
<rect x="874" y="275" width="7" height="7" fill="#ffff00"/>
<rect x="881" y="275" width="7" height="7" fill="#ffaa00"/>
<rect x="888" y="275" width="7" height="7" fill="#80ff00"/>
<rect x="895" y="275" width="7" height="7" fill="#ffff00"/>
<rect x="902" y="275" width="14" height="7" fill="#ffaa00"/>
<rect x="916" y="275" width="6" height="7" fill="#ffff00"/>
<rect x="922" y="275" width="14" height="7" fill="#ff5000"/>
<rect x="936" y="275" width="7" height="7" fill="#ffaa00"/>
<rect x="943" y="275" width="7" height="7" fill="#ffff00"/>
<rect x="950" y="275" width="35" height="7" fill="#80ff00"/>
<rect x="749" y="282" width="69" height="7" fill="#ff5000"/>
<rect x="818" y="282" width="7" height="7" fill="#ffaa00"/>
<rect x="825" y="282" width="7" height="7" fill="#ff5000"/>
<rect x="832" y="282" width="14" height="7" fill="#ffaa00"/>
<rect x="846" y="282" width="7" height="7" fill="#ffff00"/>
<rect x="853" y="282" width="7" height="7" fill="#ffaa00"/>
<rect x="860" y="282" width="28" height="7" fill="#ffff00"/>
<rect x="888" y="282" width="14" height="7" fill="#80ff00"/>
<rect x="902" y="282" width="7" height="7" fill="#ffff00"/>
<rect x="909" y="282" width="20" height="7" fill="#ffaa00"/>
<rect x="929" y="282" width="7" height="7" fill="#ff5000"/>
<rect x="936" y="282" width="7" height="7" fill="#ffaa00"/>
<rect x="943" y="282" width="14" height="7" fill="#ffff00"/>
<rect x="957" y="282" width="28" height="7" fill="#80ff00"/>
<rect x="749" y="289" width="14" height="7" fill="#ff5000"/>
<rect x="763" y="289" width="7" height="7" fill="#f00000"/>
<rect x="770" y="289" width="20" height="7" fill="#ff5000"/>
<rect x="790" y="289" width="7" height="7" fill="#ffaa00"/>
<rect x="797" y="289" width="14" height="7" fill="#f00000"/>
<rect x="811" y="289" width="7" height="7" fill="#ff5000"/>
<rect x="818" y="289" width="7" height="7" fill="#ffaa00"/>
<rect x="825" y="289" width="7" height="7" fill="#ff5000"/>
<rect x="832" y="289" width="14" height="7" fill="#ffaa00"/>
<rect x="846" y="289" width="21" height="7" fill="#ffff00"/>
<rect x="867" y="289" width="7" height="7" fill="#ffaa00"/>
<rect x="874" y="289" width="7" height="7" fill="#ff5000"/>
<rect x="881" y="289" width="7" height="7" fill="#ffaa00"/>
<rect x="888" y="289" width="7" height="7" fill="#80ff00"/>
<rect x="895" y="289" width="14" height="7" fill="#ffff00"/>
<rect x="909" y="289" width="7" height="7" fill="#ffaa00"/>
<rect x="916" y="289" width="13" height="7" fill="#ff5000"/>
<rect x="929" y="289" width="21" height="7" fill="#ffaa00"/>
<rect x="950" y="289" width="7" height="7" fill="#ffff00"/>
<rect x="957" y="289" width="28" height="7" fill="#80ff00"/>
<rect x="749" y="296" width="14" height="7" fill="#ff5000"/>
<rect x="763" y="296" width="20" height="7" fill="#ffaa00"/>
<rect x="783" y="296" width="7" height="7" fill="#ff5000"/>
<rect x="790" y="296" width="7" height="7" fill="#ffaa00"/>
<rect x="797" y="296" width="7" height="7" fill="#ff5000"/>
<rect x="804" y="296" width="21" height="7" fill="#ffaa00"/>
<rect x="825" y="296" width="7" height="7" fill="#660000"/>
<rect x="832" y="296" width="35" height="7" fill="#ffff00"/>
<rect x="867" y="296" width="14" height="7" fill="#660000"/>
<rect x="881" y="296" width="14" height="7" fill="#f00000"/>
<rect x="895" y="296" width="7" height="7" fill="#ffff00"/>
<rect x="902" y="296" width="7" height="7" fill="#ffaa00"/>
<rect x="909" y="296" width="20" height="7" fill="#f00000"/>
<rect x="929" y="296" width="14" height="7" fill="#ff5000"/>
<rect x="943" y="296" width="7" height="7" fill="#ffaa00"/>
<rect x="950" y="296" width="7" height="7" fill="#ffff00"/>
<rect x="957" y="296" width="28" height="7" fill="#80ff00"/>
<rect x="749" y="303" width="14" height="7" fill="#ff5000"/>
<rect x="763" y="303" width="7" height="7" fill="#ffaa00"/>
<rect x="770" y="303" width="13" height="7" fill="#ffff00"/>
<rect x="783" y="303" width="7" height="7" fill="#ffaa00"/>
<rect x="790" y="303" width="21" height="7" fill="#ff5000"/>
<rect x="811" y="303" width="14" height="7" fill="#ffaa00"/>
<rect x="825" y="303" width="7" height="7" fill="#660000"/>
<rect x="832" y="303" width="7" height="7" fill="#ffff00"/>
<rect x="839" y="303" width="7" height="7" fill="#80ff00"/>
<rect x="846" y="303" width="14" height="7" fill="#660000"/>
<rect x="860" y="303" width="21" height="7" fill="#80ff00"/>
<rect x="881" y="303" width="7" height="7" fill="#660000"/>
<rect x="888" y="303" width="14" height="7" fill="#f00000"/>
<rect x="902" y="303" width="14" height="7" fill="#ffaa00"/>
<rect x="916" y="303" width="20" height="7" fill="#ff5000"/>
<rect x="936" y="303" width="7" height="7" fill="#ffaa00"/>
<rect x="943" y="303" width="7" height="7" fill="#ffff00"/>
<rect x="950" y="303" width="21" height="7" fill="#80ff00"/>
<rect x="971" y="303" width="7" height="7" fill="#ffff00"/>
<rect x="978" y="303" width="7" height="7" fill="#80ff00"/>
<rect x="735" y="310" width="7" height="7" fill="#660000"/>
<rect x="742" y="310" width="7" height="7" fill="#f00000"/>
<rect x="749" y="310" width="21" height="7" fill="#ff5000"/>
<rect x="770" y="310" width="20" height="7" fill="#ffaa00"/>
<rect x="790" y="310" width="14" height="7" fill="#ffff00"/>
<rect x="804" y="310" width="21" height="7" fill="#660000"/>
<rect x="825" y="310" width="14" height="7" fill="#ffff00"/>
<rect x="839" y="310" width="7" height="7" fill="#80ff00"/>
<rect x="846" y="310" width="7" height="7" fill="#660000"/>
<rect x="853" y="310" width="7" height="7" fill="#ffff00"/>
<rect x="860" y="310" width="7" height="7" fill="#008800"/>
<rect x="867" y="310" width="21" height="7" fill="#660000"/>
<rect x="888" y="310" width="7" height="7" fill="#80ff00"/>
<rect x="895" y="310" width="7" height="7" fill="#ff5000"/>
<rect x="902" y="310" width="7" height="7" fill="#ffaa00"/>
<rect x="909" y="310" width="27" height="7" fill="#ffff00"/>
<rect x="936" y="310" width="28" height="7" fill="#80ff00"/>
<rect x="964" y="310" width="7" height="7" fill="#ff5000"/>
<rect x="971" y="310" width="7" height="7" fill="#ffaa00"/>
<rect x="978" y="310" width="7" height="7" fill="#ffff00"/>
<rect x="735" y="317" width="41" height="7" fill="#ff5000"/>
<rect x="776" y="317" width="21" height="7" fill="#ffaa00"/>
<rect x="797" y="317" width="7" height="7" fill="#ff5000"/>
<rect x="804" y="317" width="7" height="7" fill="#ffff00"/>
<rect x="811" y="317" width="21" height="7" fill="#660000"/>
<rect x="832" y="317" width="7" height="7" fill="#ffff00"/>
<rect x="839" y="317" width="7" height="7" fill="#660000"/>
<rect x="846" y="317" width="7" height="7" fill="#80ff00"/>
<rect x="853" y="317" width="7" height="7" fill="#ffff00"/>
<rect x="860" y="317" width="7" height="7" fill="#f00000"/>
<rect x="867" y="317" width="21" height="7" fill="#660000"/>
<rect x="888" y="317" width="7" height="7" fill="#f00000"/>
<rect x="895" y="317" width="7" height="7" fill="#ff5000"/>
<rect x="902" y="317" width="7" height="7" fill="#ffaa00"/>
<rect x="909" y="317" width="7" height="7" fill="#ff5000"/>
<rect x="916" y="317" width="20" height="7" fill="#ffff00"/>
<rect x="936" y="317" width="21" height="7" fill="#80ff00"/>
<rect x="957" y="317" width="7" height="7" fill="#ff5000"/>
<rect x="964" y="317" width="7" height="7" fill="#f00000"/>
<rect x="971" y="317" width="7" height="7" fill="#ff5000"/>
<rect x="978" y="317" width="7" height="7" fill="#ffaa00"/>
<rect x="735" y="324" width="14" height="7" fill="#ff5000"/>
<rect x="749" y="324" width="7" height="7" fill="#ffaa00"/>
<rect x="756" y="324" width="14" height="7" fill="#ff5000"/>
<rect x="770" y="324" width="20" height="7" fill="#ffaa00"/>
<rect x="790" y="324" width="7" height="7" fill="#ffff00"/>
<rect x="797" y="324" width="7" height="7" fill="#660000"/>
<rect x="804" y="324" width="14" height="7" fill="#ff5000"/>
<rect x="818" y="324" width="14" height="7" fill="#ffaa00"/>
<rect x="832" y="324" width="7" height="7" fill="#80ff00"/>
<rect x="839" y="324" width="7" height="7" fill="#660000"/>
<rect x="846" y="324" width="7" height="7" fill="#ffff00"/>
<rect x="853" y="324" width="7" height="7" fill="#80ff00"/>
<rect x="860" y="324" width="7" height="7" fill="#f00000"/>
<rect x="867" y="324" width="14" height="7" fill="#660000"/>
<rect x="881" y="324" width="21" height="7" fill="#f00000"/>
<rect x="902" y="324" width="20" height="7" fill="#660000"/>
<rect x="922" y="324" width="21" height="7" fill="#ffff00"/>
<rect x="943" y="324" width="14" height="7" fill="#80ff00"/>
<rect x="957" y="324" width="7" height="7" fill="#f00000"/>
<rect x="964" y="324" width="14" height="7" fill="#ffff00"/>
<rect x="978" y="324" width="7" height="7" fill="#80ff00"/>
<rect x="735" y="331" width="7" height="7" fill="#f00000"/>
<rect x="742" y="331" width="7" height="7" fill="#ff5000"/>
<rect x="749" y="331" width="14" height="7" fill="#ffaa00"/>
<rect x="763" y="331" width="7" height="7" fill="#ff5000"/>
<rect x="770" y="331" width="20" height="7" fill="#ffaa00"/>
<rect x="790" y="331" width="7" height="7" fill="#ffff00"/>
<rect x="797" y="331" width="7" height="7" fill="#ffaa00"/>
<rect x="804" y="331" width="7" height="7" fill="#ff5000"/>
<rect x="811" y="331" width="7" height="7" fill="#660000"/>
<rect x="818" y="331" width="14" height="7" fill="#ff5000"/>
<rect x="832" y="331" width="7" height="7" fill="#ffaa00"/>
<rect x="839" y="331" width="7" height="7" fill="#80ff00"/>
<rect x="846" y="331" width="7" height="7" fill="#ffff00"/>
<rect x="853" y="331" width="7" height="7" fill="#80ff00"/>
<rect x="860" y="331" width="7" height="7" fill="#f00000"/>
<rect x="867" y="331" width="7" height="7" fill="#660000"/>
<rect x="874" y="331" width="14" height="7" fill="#f00000"/>
<rect x="888" y="331" width="7" height="7" fill="#ff5000"/>
<rect x="895" y="331" width="7" height="7" fill="#80ff00"/>
<rect x="902" y="331" width="14" height="7" fill="#660000"/>
<rect x="916" y="331" width="6" height="7" fill="#f00000"/>
<rect x="922" y="331" width="7" height="7" fill="#ff5000"/>
<rect x="929" y="331" width="14" height="7" fill="#ffff00"/>
<rect x="943" y="331" width="7" height="7" fill="#80ff00"/>
<rect x="950" y="331" width="28" height="7" fill="#ffff00"/>
<rect x="978" y="331" width="7" height="7" fill="#80ff00"/>
<rect x="735" y="338" width="14" height="7" fill="#ff5000"/>
<rect x="749" y="338" width="14" height="7" fill="#ffaa00"/>
<rect x="763" y="338" width="7" height="7" fill="#ff5000"/>
<rect x="770" y="338" width="6" height="7" fill="#f00000"/>
<rect x="776" y="338" width="14" height="7" fill="#ffaa00"/>
<rect x="790" y="338" width="14" height="7" fill="#ffff00"/>
<rect x="804" y="338" width="7" height="7" fill="#ff5000"/>
<rect x="811" y="338" width="7" height="7" fill="#660000"/>
<rect x="818" y="338" width="7" height="7" fill="#ff5000"/>
<rect x="825" y="338" width="7" height="7" fill="#f00000"/>
<rect x="832" y="338" width="7" height="7" fill="#ffaa00"/>
<rect x="839" y="338" width="14" height="7" fill="#ffff00"/>
<rect x="853" y="338" width="7" height="7" fill="#80ff00"/>
<rect x="860" y="338" width="7" height="7" fill="#f00000"/>
<rect x="867" y="338" width="21" height="7" fill="#660000"/>
<rect x="888" y="338" width="7" height="7" fill="#f00000"/>
<rect x="895" y="338" width="7" height="7" fill="#ffff00"/>
<rect x="902" y="338" width="7" height="7" fill="#f00000"/>
<rect x="909" y="338" width="13" height="7" fill="#660000"/>
<rect x="922" y="338" width="14" height="7" fill="#ffaa00"/>
<rect x="936" y="338" width="7" height="7" fill="#ffff00"/>
<rect x="943" y="338" width="21" height="7" fill="#80ff00"/>
<rect x="964" y="338" width="7" height="7" fill="#f00000"/>
<rect x="971" y="338" width="14" height="7" fill="#ffff00"/>
<rect x="735" y="345" width="14" height="7" fill="#ff5000"/>
<rect x="749" y="345" width="14" height="7" fill="#ffaa00"/>
<rect x="763" y="345" width="7" height="7" fill="#ff5000"/>
<rect x="770" y="345" width="6" height="7" fill="#660000"/>
<rect x="776" y="345" width="28" height="7" fill="#ffaa00"/>
<rect x="804" y="345" width="14" height="7" fill="#ffff00"/>
<rect x="818" y="345" width="7" height="7" fill="#ff5000"/>
<rect x="825" y="345" width="7" height="7" fill="#660000"/>
<rect x="832" y="345" width="7" height="7" fill="#ff5000"/>
<rect x="839" y="345" width="7" height="7" fill="#ffaa00"/>
<rect x="846" y="345" width="21" height="7" fill="#ffff00"/>
<rect x="867" y="345" width="28" height="7" fill="#660000"/>
<rect x="895" y="345" width="7" height="7" fill="#f00000"/>
<rect x="902" y="345" width="7" height="7" fill="#ffff00"/>
<rect x="909" y="345" width="13" height="7" fill="#660000"/>
<rect x="922" y="345" width="7" height="7" fill="#ff5000"/>
<rect x="929" y="345" width="7" height="7" fill="#ffaa00"/>
<rect x="936" y="345" width="7" height="7" fill="#ffff00"/>
<rect x="943" y="345" width="14" height="7" fill="#80ff00"/>
<rect x="957" y="345" width="21" height="7" fill="#ff5000"/>
<rect x="978" y="345" width="7" height="7" fill="#ffff00"/>
<rect x="735" y="352" width="7" height="7" fill="#ffaa00"/>
<rect x="742" y="352" width="7" height="7" fill="#ff5000"/>
<rect x="749" y="352" width="14" height="7" fill="#ffaa00"/>
<rect x="763" y="352" width="7" height="7" fill="#ffff00"/>
<rect x="770" y="352" width="13" height="7" fill="#ffaa00"/>
<rect x="783" y="352" width="7" height="7" fill="#ffff00"/>
<rect x="790" y="352" width="7" height="7" fill="#f00000"/>
<rect x="797" y="352" width="7" height="7" fill="#ffaa00"/>
<rect x="804" y="352" width="14" height="7" fill="#ffff00"/>
<rect x="818" y="352" width="7" height="7" fill="#ffaa00"/>
<rect x="825" y="352" width="7" height="7" fill="#660000"/>
<rect x="832" y="352" width="14" height="7" fill="#ffaa00"/>
<rect x="846" y="352" width="7" height="7" fill="#ffff00"/>
<rect x="853" y="352" width="7" height="7" fill="#80ff00"/>
<rect x="860" y="352" width="7" height="7" fill="#ffff00"/>
<rect x="867" y="352" width="7" height="7" fill="#ff5000"/>
<rect x="874" y="352" width="7" height="7" fill="#f00000"/>
<rect x="881" y="352" width="14" height="7" fill="#660000"/>
<rect x="895" y="352" width="7" height="7" fill="#f00000"/>
<rect x="902" y="352" width="7" height="7" fill="#ffff00"/>
<rect x="909" y="352" width="7" height="7" fill="#80ff00"/>
<rect x="916" y="352" width="13" height="7" fill="#ffaa00"/>
<rect x="929" y="352" width="14" height="7" fill="#ffff00"/>
<rect x="943" y="352" width="14" height="7" fill="#80ff00"/>
<rect x="957" y="352" width="14" height="7" fill="#ff5000"/>
<rect x="971" y="352" width="7" height="7" fill="#ffff00"/>
<rect x="978" y="352" width="7" height="7" fill="#80ff00"/>
<rect x="735" y="359" width="14" height="7" fill="#ff5000"/>
<rect x="749" y="359" width="14" height="7" fill="#ffaa00"/>
<rect x="763" y="359" width="7" height="7" fill="#ffff00"/>
<rect x="770" y="359" width="6" height="7" fill="#f00000"/>
<rect x="776" y="359" width="7" height="7" fill="#ffaa00"/>
<rect x="783" y="359" width="7" height="7" fill="#ffff00"/>
<rect x="790" y="359" width="7" height="7" fill="#660000"/>
<rect x="797" y="359" width="7" height="7" fill="#ff5000"/>
<rect x="804" y="359" width="7" height="7" fill="#ffff00"/>
<rect x="811" y="359" width="7" height="7" fill="#ff5000"/>
<rect x="818" y="359" width="7" height="7" fill="#ffaa00"/>
<rect x="825" y="359" width="7" height="7" fill="#660000"/>
<rect x="832" y="359" width="21" height="7" fill="#ffaa00"/>
<rect x="853" y="359" width="7" height="7" fill="#ffff00"/>
<rect x="860" y="359" width="7" height="7" fill="#660000"/>
<rect x="867" y="359" width="14" height="7" fill="#ff5000"/>
<rect x="881" y="359" width="7" height="7" fill="#f00000"/>
<rect x="888" y="359" width="7" height="7" fill="#660000"/>
<rect x="895" y="359" width="7" height="7" fill="#f00000"/>
<rect x="902" y="359" width="14" height="7" fill="#ffff00"/>
<rect x="916" y="359" width="6" height="7" fill="#660000"/>
<rect x="922" y="359" width="7" height="7" fill="#f00000"/>
<rect x="929" y="359" width="7" height="7" fill="#ffff00"/>
<rect x="936" y="359" width="21" height="7" fill="#80ff00"/>
<rect x="957" y="359" width="7" height="7" fill="#ff5000"/>
<rect x="964" y="359" width="7" height="7" fill="#ffff00"/>
<rect x="971" y="359" width="14" height="7" fill="#80ff00"/>
<rect x="735" y="366" width="21" height="7" fill="#ff5000"/>
<rect x="756" y="366" width="14" height="7" fill="#ffaa00"/>
<rect x="770" y="366" width="6" height="7" fill="#ffff00"/>
<rect x="776" y="366" width="14" height="7" fill="#ffaa00"/>
<rect x="790" y="366" width="7" height="7" fill="#ff5000"/>
<rect x="797" y="366" width="7" height="7" fill="#f00000"/>
<rect x="804" y="366" width="14" height="7" fill="#ff5000"/>
<rect x="818" y="366" width="14" height="7" fill="#ffaa00"/>
<rect x="832" y="366" width="7" height="7" fill="#ff5000"/>
<rect x="839" y="366" width="7" height="7" fill="#ffaa00"/>
<rect x="846" y="366" width="14" height="7" fill="#ffff00"/>
<rect x="860" y="366" width="7" height="7" fill="#660000"/>
<rect x="867" y="366" width="7" height="7" fill="#f00000"/>
<rect x="874" y="366" width="7" height="7" fill="#660000"/>
<rect x="881" y="366" width="7" height="7" fill="#ffff00"/>
<rect x="888" y="366" width="7" height="7" fill="#660000"/>
<rect x="895" y="366" width="7" height="7" fill="#ffaa00"/>
<rect x="902" y="366" width="14" height="7" fill="#80ff00"/>
<rect x="916" y="366" width="20" height="7" fill="#f00000"/>
<rect x="936" y="366" width="7" height="7" fill="#ffff00"/>
<rect x="943" y="366" width="7" height="7" fill="#80ff00"/>
<rect x="950" y="366" width="7" height="7" fill="#ff5000"/>
<rect x="957" y="366" width="7" height="7" fill="#f00000"/>
<rect x="964" y="366" width="7" height="7" fill="#ffff00"/>
<rect x="971" y="366" width="7" height="7" fill="#80ff00"/>
<rect x="978" y="366" width="7" height="7" fill="#ffff00"/>
<rect x="735" y="373" width="21" height="7" fill="#ff5000"/>
<rect x="756" y="373" width="14" height="7" fill="#ffaa00"/>
<rect x="770" y="373" width="6" height="7" fill="#ff5000"/>
<rect x="776" y="373" width="21" height="7" fill="#ffaa00"/>
<rect x="797" y="373" width="14" height="7" fill="#ffff00"/>
<rect x="811" y="373" width="7" height="7" fill="#ff5000"/>
<rect x="818" y="373" width="7" height="7" fill="#f00000"/>
<rect x="825" y="373" width="7" height="7" fill="#ffaa00"/>
<rect x="832" y="373" width="14" height="7" fill="#ff5000"/>
<rect x="846" y="373" width="7" height="7" fill="#ffff00"/>
<rect x="853" y="373" width="7" height="7" fill="#ffaa00"/>
<rect x="860" y="373" width="7" height="7" fill="#ff5000"/>
<rect x="867" y="373" width="14" height="7" fill="#ffff00"/>
<rect x="881" y="373" width="7" height="7" fill="#80ff00"/>
<rect x="888" y="373" width="7" height="7" fill="#660000"/>
<rect x="895" y="373" width="21" height="7" fill="#ffff00"/>
<rect x="916" y="373" width="13" height="7" fill="#ffaa00"/>
<rect x="929" y="373" width="7" height="7" fill="#f00000"/>
<rect x="936" y="373" width="7" height="7" fill="#ffff00"/>
<rect x="943" y="373" width="7" height="7" fill="#80ff00"/>
<rect x="950" y="373" width="7" height="7" fill="#f00000"/>
<rect x="957" y="373" width="7" height="7" fill="#660000"/>
<rect x="964" y="373" width="14" height="7" fill="#ffff00"/>
<rect x="978" y="373" width="7" height="7" fill="#80ff00"/>
<rect x="735" y="380" width="14" height="7" fill="#ff5000"/>
<rect x="749" y="380" width="7" height="7" fill="#ffaa00"/>
<rect x="756" y="380" width="14" height="7" fill="#ff5000"/>
<rect x="770" y="380" width="20" height="7" fill="#ffaa00"/>
<rect x="790" y="380" width="14" height="7" fill="#ffff00"/>
<rect x="804" y="380" width="14" height="7" fill="#ff5000"/>
<rect x="818" y="380" width="7" height="7" fill="#f00000"/>
<rect x="825" y="380" width="7" height="7" fill="#ff5000"/>
<rect x="832" y="380" width="14" height="7" fill="#ffaa00"/>
<rect x="846" y="380" width="7" height="7" fill="#ff5000"/>
<rect x="853" y="380" width="7" height="7" fill="#f00000"/>
<rect x="860" y="380" width="7" height="7" fill="#ffaa00"/>
<rect x="867" y="380" width="7" height="7" fill="#ffff00"/>
<rect x="874" y="380" width="7" height="7" fill="#660000"/>
<rect x="881" y="380" width="14" height="7" fill="#80ff00"/>
<rect x="895" y="380" width="7" height="7" fill="#ffff00"/>
<rect x="902" y="380" width="7" height="7" fill="#80ff00"/>
<rect x="909" y="380" width="13" height="7" fill="#ffff00"/>
<rect x="922" y="380" width="14" height="7" fill="#ffaa00"/>
<rect x="936" y="380" width="7" height="7" fill="#ffff00"/>
<rect x="943" y="380" width="14" height="7" fill="#80ff00"/>
<rect x="957" y="380" width="7" height="7" fill="#660000"/>
<rect x="964" y="380" width="7" height="7" fill="#f00000"/>
<rect x="971" y="380" width="7" height="7" fill="#ffff00"/>
<rect x="978" y="380" width="7" height="7" fill="#80ff00"/>
<rect x="735" y="387" width="7" height="7" fill="#ffaa00"/>
<rect x="742" y="387" width="21" height="7" fill="#ff5000"/>
<rect x="763" y="387" width="7" height="7" fill="#ffaa00"/>
<rect x="770" y="387" width="6" height="7" fill="#ff5000"/>
<rect x="776" y="387" width="14" height="7" fill="#ffaa00"/>
<rect x="790" y="387" width="7" height="7" fill="#ffff00"/>
<rect x="797" y="387" width="7" height="7" fill="#ffaa00"/>
<rect x="804" y="387" width="7" height="7" fill="#ff5000"/>
<rect x="811" y="387" width="7" height="7" fill="#ffaa00"/>
<rect x="818" y="387" width="7" height="7" fill="#660000"/>
<rect x="825" y="387" width="14" height="7" fill="#f00000"/>
<rect x="839" y="387" width="7" height="7" fill="#ffaa00"/>
<rect x="846" y="387" width="14" height="7" fill="#f00000"/>
<rect x="860" y="387" width="21" height="7" fill="#ffff00"/>
<rect x="881" y="387" width="7" height="7" fill="#80ff00"/>
<rect x="888" y="387" width="7" height="7" fill="#ffff00"/>
<rect x="895" y="387" width="7" height="7" fill="#ff5000"/>
<rect x="902" y="387" width="7" height="7" fill="#ffaa00"/>
<rect x="909" y="387" width="7" height="7" fill="#ff5000"/>
<rect x="916" y="387" width="6" height="7" fill="#80ff00"/>
<rect x="922" y="387" width="7" height="7" fill="#ffaa00"/>
<rect x="929" y="387" width="14" height="7" fill="#ffff00"/>
<rect x="943" y="387" width="14" height="7" fill="#80ff00"/>
<rect x="957" y="387" width="7" height="7" fill="#f00000"/>
<rect x="964" y="387" width="7" height="7" fill="#660000"/>
<rect x="971" y="387" width="14" height="7" fill="#ffff00"/>
<rect x="735" y="394" width="14" height="6" fill="#ff5000"/>
<rect x="749" y="394" width="7" height="6" fill="#ffaa00"/>
<rect x="756" y="394" width="7" height="6" fill="#ff5000"/>
<rect x="763" y="394" width="7" height="6" fill="#ffaa00"/>
<rect x="770" y="394" width="6" height="6" fill="#ff5000"/>
<rect x="776" y="394" width="28" height="6" fill="#ffaa00"/>
<rect x="804" y="394" width="14" height="6" fill="#ffff00"/>
<rect x="818" y="394" width="7" height="6" fill="#f00000"/>
<rect x="825" y="394" width="7" height="6" fill="#ff5000"/>
<rect x="832" y="394" width="14" height="6" fill="#f00000"/>
<rect x="846" y="394" width="7" height="6" fill="#ff5000"/>
<rect x="853" y="394" width="7" height="6" fill="#ffaa00"/>
<rect x="860" y="394" width="7" height="6" fill="#ffff00"/>
<rect x="867" y="394" width="7" height="6" fill="#f00000"/>
<rect x="874" y="394" width="7" height="6" fill="#660000"/>
<rect x="881" y="394" width="7" height="6" fill="#ffff00"/>
<rect x="888" y="394" width="7" height="6" fill="#80ff00"/>
<rect x="895" y="394" width="7" height="6" fill="#f00000"/>
<rect x="902" y="394" width="7" height="6" fill="#660000"/>
<rect x="909" y="394" width="13" height="6" fill="#f00000"/>
<rect x="922" y="394" width="21" height="6" fill="#ffff00"/>
<rect x="943" y="394" width="7" height="6" fill="#80ff00"/>
<rect x="950" y="394" width="7" height="6" fill="#ffff00"/>
<rect x="957" y="394" width="7" height="6" fill="#f00000"/>
<rect x="964" y="394" width="7" height="6" fill="#ffff00"/>
<rect x="971" y="394" width="14" height="6" fill="#80ff00"/>
<rect x="735" y="400" width="7" height="7" fill="#ff5000"/>
<rect x="742" y="400" width="7" height="7" fill="#f00000"/>
<rect x="749" y="400" width="7" height="7" fill="#ffaa00"/>
<rect x="756" y="400" width="14" height="7" fill="#ff5000"/>
<rect x="770" y="400" width="20" height="7" fill="#ffaa00"/>
<rect x="790" y="400" width="7" height="7" fill="#ffff00"/>
<rect x="797" y="400" width="7" height="7" fill="#ffaa00"/>
<rect x="804" y="400" width="7" height="7" fill="#ffff00"/>
<rect x="811" y="400" width="21" height="7" fill="#ff5000"/>
<rect x="832" y="400" width="7" height="7" fill="#f00000"/>
<rect x="839" y="400" width="21" height="7" fill="#ffaa00"/>
<rect x="860" y="400" width="7" height="7" fill="#ffff00"/>
<rect x="867" y="400" width="7" height="7" fill="#f00000"/>
<rect x="874" y="400" width="7" height="7" fill="#660000"/>
<rect x="881" y="400" width="7" height="7" fill="#ffff00"/>
<rect x="888" y="400" width="7" height="7" fill="#ff5000"/>
<rect x="895" y="400" width="7" height="7" fill="#f00000"/>
<rect x="902" y="400" width="14" height="7" fill="#660000"/>
<rect x="916" y="400" width="6" height="7" fill="#f00000"/>
<rect x="922" y="400" width="7" height="7" fill="#ffff00"/>
<rect x="929" y="400" width="7" height="7" fill="#80ff00"/>
<rect x="936" y="400" width="7" height="7" fill="#ffff00"/>
<rect x="943" y="400" width="7" height="7" fill="#80ff00"/>
<rect x="950" y="400" width="28" height="7" fill="#ffff00"/>
<rect x="978" y="400" width="7" height="7" fill="#80ff00"/>
<rect x="735" y="407" width="7" height="7" fill="#ffaa00"/>
<rect x="742" y="407" width="14" height="7" fill="#ff5000"/>
<rect x="756" y="407" width="14" height="7" fill="#ffaa00"/>
<rect x="770" y="407" width="6" height="7" fill="#ffff00"/>
<rect x="776" y="407" width="28" height="7" fill="#ffaa00"/>
<rect x="804" y="407" width="14" height="7" fill="#ffff00"/>
<rect x="818" y="407" width="7" height="7" fill="#ff5000"/>
<rect x="825" y="407" width="14" height="7" fill="#f00000"/>
<rect x="839" y="407" width="21" height="7" fill="#ffaa00"/>
<rect x="860" y="407" width="7" height="7" fill="#f00000"/>
<rect x="867" y="407" width="7" height="7" fill="#ffaa00"/>
<rect x="874" y="407" width="14" height="7" fill="#ffff00"/>
<rect x="888" y="407" width="7" height="7" fill="#80ff00"/>
<rect x="895" y="407" width="7" height="7" fill="#ffff00"/>
<rect x="902" y="407" width="20" height="7" fill="#660000"/>
<rect x="922" y="407" width="7" height="7" fill="#ffff00"/>
<rect x="929" y="407" width="7" height="7" fill="#80ff00"/>
<rect x="936" y="407" width="7" height="7" fill="#ffff00"/>
<rect x="943" y="407" width="7" height="7" fill="#f00000"/>
<rect x="950" y="407" width="7" height="7" fill="#ff5000"/>
<rect x="957" y="407" width="28" height="7" fill="#ffff00"/>
<rect x="735" y="414" width="7" height="7" fill="#ffaa00"/>
<rect x="742" y="414" width="14" height="7" fill="#ff5000"/>
<rect x="756" y="414" width="7" height="7" fill="#ffaa00"/>
<rect x="763" y="414" width="7" height="7" fill="#ff5000"/>
<rect x="770" y="414" width="20" height="7" fill="#ffaa00"/>
<rect x="790" y="414" width="7" height="7" fill="#ffff00"/>
<rect x="797" y="414" width="14" height="7" fill="#ffaa00"/>
<rect x="811" y="414" width="14" height="7" fill="#ffff00"/>
<rect x="825" y="414" width="7" height="7" fill="#f00000"/>
<rect x="832" y="414" width="7" height="7" fill="#ffaa00"/>
<rect x="839" y="414" width="7" height="7" fill="#ffff00"/>
<rect x="846" y="414" width="7" height="7" fill="#ff5000"/>
<rect x="853" y="414" width="7" height="7" fill="#f00000"/>
<rect x="860" y="414" width="14" height="7" fill="#ffaa00"/>
<rect x="874" y="414" width="14" height="7" fill="#ffff00"/>
<rect x="888" y="414" width="14" height="7" fill="#80ff00"/>
<rect x="902" y="414" width="7" height="7" fill="#660000"/>
<rect x="909" y="414" width="20" height="7" fill="#ffff00"/>
<rect x="929" y="414" width="7" height="7" fill="#80ff00"/>
<rect x="936" y="414" width="7" height="7" fill="#ffff00"/>
<rect x="943" y="414" width="7" height="7" fill="#f00000"/>
<rect x="950" y="414" width="7" height="7" fill="#ff5000"/>
<rect x="957" y="414" width="7" height="7" fill="#80ff00"/>
<rect x="964" y="414" width="7" height="7" fill="#ff5000"/>
<rect x="971" y="414" width="14" height="7" fill="#ffff00"/>
<rect x="735" y="421" width="14" height="7" fill="#ff5000"/>
<rect x="749" y="421" width="27" height="7" fill="#ffaa00"/>
<rect x="776" y="421" width="7" height="7" fill="#ffff00"/>
<rect x="783" y="421" width="7" height="7" fill="#ffaa00"/>
<rect x="790" y="421" width="14" height="7" fill="#ffff00"/>
<rect x="804" y="421" width="14" height="7" fill="#ffaa00"/>
<rect x="818" y="421" width="21" height="7" fill="#ffff00"/>
<rect x="839" y="421" width="7" height="7" fill="#80ff00"/>
<rect x="846" y="421" width="14" height="7" fill="#660000"/>
<rect x="860" y="421" width="14" height="7" fill="#ffaa00"/>
<rect x="874" y="421" width="28" height="7" fill="#ffff00"/>
<rect x="902" y="421" width="14" height="7" fill="#ffaa00"/>
<rect x="916" y="421" width="34" height="7" fill="#ffff00"/>
<rect x="950" y="421" width="14" height="7" fill="#80ff00"/>
<rect x="964" y="421" width="7" height="7" fill="#660000"/>
<rect x="971" y="421" width="7" height="7" fill="#f00000"/>
<rect x="978" y="421" width="7" height="7" fill="#80ff00"/>
<rect x="735" y="428" width="14" height="7" fill="#ff5000"/>
<rect x="749" y="428" width="7" height="7" fill="#ffaa00"/>
<rect x="756" y="428" width="7" height="7" fill="#ff5000"/>
<rect x="763" y="428" width="7" height="7" fill="#ffff00"/>
<rect x="770" y="428" width="6" height="7" fill="#ffaa00"/>
<rect x="776" y="428" width="7" height="7" fill="#ffff00"/>
<rect x="783" y="428" width="14" height="7" fill="#ffaa00"/>
<rect x="797" y="428" width="7" height="7" fill="#ffff00"/>
<rect x="804" y="428" width="14" height="7" fill="#ffaa00"/>
<rect x="818" y="428" width="28" height="7" fill="#ffff00"/>
<rect x="846" y="428" width="14" height="7" fill="#660000"/>
<rect x="860" y="428" width="14" height="7" fill="#ffaa00"/>
<rect x="874" y="428" width="7" height="7" fill="#ffff00"/>
<rect x="881" y="428" width="7" height="7" fill="#80ff00"/>
<rect x="888" y="428" width="7" height="7" fill="#f00000"/>
<rect x="895" y="428" width="7" height="7" fill="#ffff00"/>
<rect x="902" y="428" width="7" height="7" fill="#ffaa00"/>
<rect x="909" y="428" width="41" height="7" fill="#ffff00"/>
<rect x="950" y="428" width="7" height="7" fill="#80ff00"/>
<rect x="957" y="428" width="7" height="7" fill="#ffaa00"/>
<rect x="964" y="428" width="14" height="7" fill="#660000"/>
<rect x="978" y="428" width="7" height="7" fill="#80ff00"/>
<rect x="721" y="435" width="7" height="7" fill="#ff5000"/>
<rect x="728" y="435" width="7" height="7" fill="#f00000"/>
<rect x="735" y="435" width="14" height="7" fill="#ff5000"/>
<rect x="749" y="435" width="7" height="7" fill="#ffaa00"/>
<rect x="756" y="435" width="7" height="7" fill="#ff5000"/>
<rect x="763" y="435" width="27" height="7" fill="#ffaa00"/>
<rect x="790" y="435" width="42" height="7" fill="#ffd400"/>
<rect x="832" y="435" width="14" height="7" fill="#ffff00"/>
<rect x="846" y="435" width="28" height="7" fill="#ffaa00"/>
<rect x="874" y="435" width="14" height="7" fill="#ffff00"/>
<rect x="888" y="435" width="14" height="7" fill="#ff5000"/>
<rect x="902" y="435" width="7" height="7" fill="#ffff00"/>
<rect x="909" y="435" width="7" height="7" fill="#80ff00"/>
<rect x="916" y="435" width="34" height="7" fill="#ffff00"/>
<rect x="950" y="435" width="14" height="7" fill="#80ff00"/>
<rect x="964" y="435" width="7" height="7" fill="#f00000"/>
<rect x="971" y="435" width="14" height="7" fill="#80ff00"/>
<rect x="721" y="442" width="7" height="7" fill="#ff5000"/>
<rect x="728" y="442" width="7" height="7" fill="#f00000"/>
<rect x="735" y="442" width="14" height="7" fill="#ff5000"/>
<rect x="749" y="442" width="7" height="7" fill="#ffff00"/>
<rect x="756" y="442" width="34" height="7" fill="#ffaa00"/>
<rect x="790" y="442" width="42" height="7" fill="#ffd400"/>
<rect x="832" y="442" width="42" height="7" fill="#ffff00"/>
<rect x="874" y="442" width="7" height="7" fill="#80ff00"/>
<rect x="881" y="442" width="7" height="7" fill="#660000"/>
<rect x="888" y="442" width="14" height="7" fill="#f00000"/>
<rect x="902" y="442" width="7" height="7" fill="#ffaa00"/>
<rect x="909" y="442" width="20" height="7" fill="#ffff00"/>
<rect x="929" y="442" width="7" height="7" fill="#80ff00"/>
<rect x="936" y="442" width="21" height="7" fill="#ffff00"/>
<rect x="957" y="442" width="7" height="7" fill="#80ff00"/>
<rect x="964" y="442" width="7" height="7" fill="#ffff00"/>
<rect x="971" y="442" width="14" height="7" fill="#80ff00"/>
<rect x="721" y="449" width="7" height="7" fill="#ff5000"/>
<rect x="728" y="449" width="7" height="7" fill="#f00000"/>
<rect x="735" y="449" width="7" height="7" fill="#ff5000"/>
<rect x="742" y="449" width="48" height="7" fill="#ffaa00"/>
<rect x="790" y="449" width="14" height="7" fill="#ffd400"/>
<rect x="804" y="449" width="63" height="7" fill="#ffff00"/>
<rect x="867" y="449" width="14" height="7" fill="#80ff00"/>
<rect x="881" y="449" width="7" height="7" fill="#ffff00"/>
<rect x="888" y="449" width="28" height="7" fill="#ffaa00"/>
<rect x="916" y="449" width="13" height="7" fill="#ffff00"/>
<rect x="929" y="449" width="7" height="7" fill="#80ff00"/>
<rect x="936" y="449" width="7" height="7" fill="#ffff00"/>
<rect x="943" y="449" width="14" height="7" fill="#80ff00"/>
<rect x="957" y="449" width="21" height="7" fill="#ffff00"/>
<rect x="978" y="449" width="7" height="7" fill="#80ff00"/>
<rect x="721" y="456" width="7" height="7" fill="#ff5000"/>
<rect x="728" y="456" width="7" height="7" fill="#f00000"/>
<rect x="735" y="456" width="7" height="7" fill="#ffaa00"/>
<rect x="742" y="456" width="7" height="7" fill="#ff5000"/>
<rect x="749" y="456" width="7" height="7" fill="#ffaa00"/>
<rect x="756" y="456" width="7" height="7" fill="#ff5000"/>
<rect x="763" y="456" width="7" height="7" fill="#ffaa00"/>
<rect x="770" y="456" width="6" height="7" fill="#ffff00"/>
<rect x="776" y="456" width="14" height="7" fill="#ffaa00"/>
<rect x="790" y="456" width="14" height="7" fill="#ffd400"/>
<rect x="804" y="456" width="56" height="7" fill="#ffff00"/>
<rect x="860" y="456" width="14" height="7" fill="#80ff00"/>
<rect x="874" y="456" width="7" height="7" fill="#f00000"/>
<rect x="881" y="456" width="7" height="7" fill="#80ff00"/>
<rect x="888" y="456" width="14" height="7" fill="#ffff00"/>
<rect x="902" y="456" width="14" height="7" fill="#ffaa00"/>
<rect x="916" y="456" width="6" height="7" fill="#ff5000"/>
<rect x="922" y="456" width="7" height="7" fill="#ffff00"/>
<rect x="929" y="456" width="21" height="7" fill="#80ff00"/>
<rect x="950" y="456" width="7" height="7" fill="#ffff00"/>
<rect x="957" y="456" width="7" height="7" fill="#80ff00"/>
<rect x="964" y="456" width="7" height="7" fill="#ffff00"/>
<rect x="971" y="456" width="7" height="7" fill="#80ff00"/>
<rect x="978" y="456" width="7" height="7" fill="#ffff00"/>
<rect x="721" y="463" width="7" height="7" fill="#ffaa00"/>
<rect x="728" y="463" width="21" height="7" fill="#ff5000"/>
<rect x="749" y="463" width="7" height="7" fill="#ffff00"/>
<rect x="756" y="463" width="7" height="7" fill="#ff5000"/>
<rect x="763" y="463" width="13" height="7" fill="#ffaa00"/>
<rect x="776" y="463" width="14" height="7" fill="#ffc600"/>
<rect x="790" y="463" width="14" height="7" fill="#ffd400"/>
<rect x="804" y="463" width="14" height="7" fill="#ffe300"/>
<rect x="818" y="463" width="35" height="7" fill="#ffff00"/>
<rect x="853" y="463" width="7" height="7" fill="#80ff00"/>
<rect x="860" y="463" width="7" height="7" fill="#ffff00"/>
<rect x="867" y="463" width="7" height="7" fill="#80ff00"/>
<rect x="874" y="463" width="7" height="7" fill="#ff5000"/>
<rect x="881" y="463" width="7" height="7" fill="#ffaa00"/>
<rect x="888" y="463" width="7" height="7" fill="#ffff00"/>
<rect x="895" y="463" width="14" height="7" fill="#80ff00"/>
<rect x="909" y="463" width="13" height="7" fill="#ffaa00"/>
<rect x="922" y="463" width="14" height="7" fill="#ffff00"/>
<rect x="936" y="463" width="14" height="7" fill="#80ff00"/>
<rect x="950" y="463" width="21" height="7" fill="#ffff00"/>
<rect x="971" y="463" width="7" height="7" fill="#80ff00"/>
<rect x="978" y="463" width="7" height="7" fill="#ffff00"/>
<rect x="721" y="470" width="7" height="7" fill="#f00000"/>
<rect x="728" y="470" width="21" height="7" fill="#ff5000"/>
<rect x="749" y="470" width="27" height="7" fill="#ffaa00"/>
<rect x="776" y="470" width="14" height="7" fill="#ffc600"/>
<rect x="790" y="470" width="14" height="7" fill="#ffd400"/>
<rect x="804" y="470" width="14" height="7" fill="#ffe300"/>
<rect x="818" y="470" width="56" height="7" fill="#ffff00"/>
<rect x="874" y="470" width="7" height="7" fill="#80ff00"/>
<rect x="881" y="470" width="7" height="7" fill="#ffaa00"/>
<rect x="888" y="470" width="14" height="7" fill="#ffff00"/>
<rect x="902" y="470" width="14" height="7" fill="#80ff00"/>
<rect x="916" y="470" width="6" height="7" fill="#ffff00"/>
<rect x="922" y="470" width="7" height="7" fill="#ffaa00"/>
<rect x="929" y="470" width="7" height="7" fill="#ffff00"/>
<rect x="936" y="470" width="14" height="7" fill="#80ff00"/>
<rect x="950" y="470" width="7" height="7" fill="#ffff00"/>
<rect x="957" y="470" width="7" height="7" fill="#80ff00"/>
<rect x="964" y="470" width="7" height="7" fill="#ffff00"/>
<rect x="971" y="470" width="14" height="7" fill="#80ff00"/>
<rect x="721" y="477" width="7" height="7" fill="#ffaa00"/>
<rect x="728" y="477" width="28" height="7" fill="#ff5000"/>
<rect x="756" y="477" width="20" height="7" fill="#ffaa00"/>
<rect x="776" y="477" width="42" height="7" fill="#ffd400"/>
<rect x="818" y="477" width="42" height="7" fill="#ffff00"/>
<rect x="860" y="477" width="7" height="7" fill="#80ff00"/>
<rect x="867" y="477" width="21" height="7" fill="#ffff00"/>
<rect x="888" y="477" width="7" height="7" fill="#80ff00"/>
<rect x="895" y="477" width="7" height="7" fill="#ffff00"/>
<rect x="902" y="477" width="7" height="7" fill="#80ff00"/>
<rect x="909" y="477" width="7" height="7" fill="#ffff00"/>
<rect x="916" y="477" width="6" height="7" fill="#80ff00"/>
<rect x="922" y="477" width="7" height="7" fill="#ffff00"/>
<rect x="929" y="477" width="7" height="7" fill="#ffaa00"/>
<rect x="936" y="477" width="7" height="7" fill="#ffff00"/>
<rect x="943" y="477" width="7" height="7" fill="#80ff00"/>
<rect x="950" y="477" width="7" height="7" fill="#ffff00"/>
<rect x="957" y="477" width="7" height="7" fill="#80ff00"/>
<rect x="964" y="477" width="7" height="7" fill="#ffff00"/>
<rect x="971" y="477" width="14" height="7" fill="#80ff00"/>
<rect x="721" y="484" width="21" height="7" fill="#ff5000"/>
<rect x="742" y="484" width="34" height="7" fill="#ffaa00"/>
<rect x="776" y="484" width="42" height="7" fill="#ffd400"/>
<rect x="818" y="484" width="84" height="7" fill="#ffff00"/>
<rect x="902" y="484" width="7" height="7" fill="#80ff00"/>
<rect x="909" y="484" width="7" height="7" fill="#ffff00"/>
<rect x="916" y="484" width="6" height="7" fill="#80ff00"/>
<rect x="922" y="484" width="7" height="7" fill="#ffff00"/>
<rect x="929" y="484" width="7" height="7" fill="#ffaa00"/>
<rect x="936" y="484" width="7" height="7" fill="#ffff00"/>
<rect x="943" y="484" width="7" height="7" fill="#80ff00"/>
<rect x="950" y="484" width="7" height="7" fill="#ffff00"/>
<rect x="957" y="484" width="28" height="7" fill="#80ff00"/>
<rect x="721" y="491" width="21" height="7" fill="#ff5000"/>
<rect x="742" y="491" width="34" height="7" fill="#ffaa00"/>
<rect x="776" y="491" width="14" height="7" fill="#ffd400"/>
<rect x="790" y="491" width="119" height="7" fill="#ffff00"/>
<rect x="909" y="491" width="20" height="7" fill="#80ff00"/>
<rect x="929" y="491" width="7" height="7" fill="#ffff00"/>
<rect x="936" y="491" width="7" height="7" fill="#ffaa00"/>
<rect x="943" y="491" width="7" height="7" fill="#ffff00"/>
<rect x="950" y="491" width="35" height="7" fill="#80ff00"/>
<rect x="721" y="498" width="14" height="7" fill="#ff5000"/>
<rect x="735" y="498" width="7" height="7" fill="#ffaa00"/>
<rect x="742" y="498" width="7" height="7" fill="#ff5000"/>
<rect x="749" y="498" width="27" height="7" fill="#ffaa00"/>
<rect x="776" y="498" width="14" height="7" fill="#ffd400"/>
<rect x="790" y="498" width="112" height="7" fill="#ffff00"/>
<rect x="902" y="498" width="27" height="7" fill="#80ff00"/>
<rect x="929" y="498" width="7" height="7" fill="#ff5000"/>
<rect x="936" y="498" width="7" height="7" fill="#ffaa00"/>
<rect x="943" y="498" width="7" height="7" fill="#ff5000"/>
<rect x="950" y="498" width="35" height="7" fill="#80ff00"/>
<rect x="721" y="505" width="14" height="7" fill="#ff5000"/>
<rect x="735" y="505" width="7" height="7" fill="#ffaa00"/>
<rect x="742" y="505" width="7" height="7" fill="#ff5000"/>
<rect x="749" y="505" width="27" height="7" fill="#ffaa00"/>
<rect x="776" y="505" width="14" height="7" fill="#ffc600"/>
<rect x="790" y="505" width="98" height="7" fill="#ffff00"/>
<rect x="888" y="505" width="7" height="7" fill="#80ff00"/>
<rect x="895" y="505" width="7" height="7" fill="#ffaa00"/>
<rect x="902" y="505" width="7" height="7" fill="#80ff00"/>
<rect x="909" y="505" width="20" height="7" fill="#f00000"/>
<rect x="929" y="505" width="14" height="7" fill="#ffaa00"/>
<rect x="943" y="505" width="7" height="7" fill="#ff5000"/>
<rect x="950" y="505" width="7" height="7" fill="#ffff00"/>
<rect x="957" y="505" width="28" height="7" fill="#80ff00"/>
<rect x="721" y="512" width="7" height="7" fill="#ffaa00"/>
<rect x="728" y="512" width="7" height="7" fill="#ff5000"/>
<rect x="735" y="512" width="14" height="7" fill="#ffaa00"/>
<rect x="749" y="512" width="7" height="7" fill="#ffff00"/>
<rect x="756" y="512" width="20" height="7" fill="#ffaa00"/>
<rect x="776" y="512" width="14" height="7" fill="#ffc600"/>
<rect x="790" y="512" width="112" height="7" fill="#ffff00"/>
<rect x="902" y="512" width="14" height="7" fill="#80ff00"/>
<rect x="916" y="512" width="13" height="7" fill="#f00000"/>
<rect x="929" y="512" width="7" height="7" fill="#ffaa00"/>
<rect x="936" y="512" width="14" height="7" fill="#ffff00"/>
<rect x="950" y="512" width="21" height="7" fill="#80ff00"/>
<rect x="971" y="512" width="14" height="7" fill="#ffff00"/>
<rect x="721" y="519" width="14" height="7" fill="#ff5000"/>
<rect x="735" y="519" width="41" height="7" fill="#ffaa00"/>
<rect x="776" y="519" width="14" height="7" fill="#ffd400"/>
<rect x="790" y="519" width="119" height="7" fill="#ffff00"/>
<rect x="909" y="519" width="13" height="7" fill="#80ff00"/>
<rect x="922" y="519" width="7" height="7" fill="#f00000"/>
<rect x="929" y="519" width="14" height="7" fill="#80ff00"/>
<rect x="943" y="519" width="14" height="7" fill="#ffff00"/>
<rect x="957" y="519" width="14" height="7" fill="#80ff00"/>
<rect x="971" y="519" width="7" height="7" fill="#ffff00"/>
<rect x="978" y="519" width="7" height="7" fill="#80ff00"/>
<rect x="721" y="526" width="28" height="6" fill="#ffaa00"/>
<rect x="749" y="526" width="7" height="6" fill="#ffff00"/>
<rect x="756" y="526" width="14" height="6" fill="#ffaa00"/>
<rect x="770" y="526" width="6" height="6" fill="#ffff00"/>
<rect x="776" y="526" width="14" height="6" fill="#ffd400"/>
<rect x="790" y="526" width="126" height="6" fill="#ffff00"/>
<rect x="916" y="526" width="6" height="6" fill="#80ff00"/>
<rect x="922" y="526" width="7" height="6" fill="#f00000"/>
<rect x="929" y="526" width="21" height="6" fill="#80ff00"/>
<rect x="950" y="526" width="7" height="6" fill="#ffff00"/>
<rect x="957" y="526" width="7" height="6" fill="#80ff00"/>
<rect x="964" y="526" width="21" height="6" fill="#ffff00"/>
<rect x="721" y="532" width="7" height="7" fill="#ffaa00"/>
<rect x="728" y="532" width="7" height="7" fill="#ff5000"/>
<rect x="735" y="532" width="7" height="7" fill="#ffaa00"/>
<rect x="742" y="532" width="7" height="7" fill="#ffff00"/>
<rect x="749" y="532" width="7" height="7" fill="#ffaa00"/>
<rect x="756" y="532" width="14" height="7" fill="#ffff00"/>
<rect x="770" y="532" width="6" height="7" fill="#ffaa00"/>
<rect x="776" y="532" width="14" height="7" fill="#ffd400"/>
<rect x="790" y="532" width="126" height="7" fill="#ffff00"/>
<rect x="916" y="532" width="6" height="7" fill="#80ff00"/>
<rect x="922" y="532" width="7" height="7" fill="#ffaa00"/>
<rect x="929" y="532" width="28" height="7" fill="#80ff00"/>
<rect x="957" y="532" width="28" height="7" fill="#ffff00"/>
<rect x="721" y="539" width="7" height="7" fill="#ff5000"/>
<rect x="728" y="539" width="7" height="7" fill="#ffaa00"/>
<rect x="735" y="539" width="7" height="7" fill="#ffff00"/>
<rect x="742" y="539" width="21" height="7" fill="#ffaa00"/>
<rect x="763" y="539" width="13" height="7" fill="#ffff00"/>
<rect x="776" y="539" width="14" height="7" fill="#ffd400"/>
<rect x="790" y="539" width="63" height="7" fill="#ffff00"/>
<rect x="853" y="539" width="14" height="7" fill="#80ff00"/>
<rect x="867" y="539" width="21" height="7" fill="#ffff00"/>
<rect x="888" y="539" width="7" height="7" fill="#80ff00"/>
<rect x="895" y="539" width="27" height="7" fill="#ffff00"/>
<rect x="922" y="539" width="42" height="7" fill="#80ff00"/>
<rect x="964" y="539" width="21" height="7" fill="#ffff00"/>
<rect x="707" y="546" width="21" height="7" fill="#ff5000"/>
<rect x="728" y="546" width="14" height="7" fill="#ffaa00"/>
<rect x="742" y="546" width="7" height="7" fill="#ffff00"/>
<rect x="749" y="546" width="7" height="7" fill="#ffaa00"/>
<rect x="756" y="546" width="14" height="7" fill="#ffff00"/>
<rect x="770" y="546" width="6" height="7" fill="#ffaa00"/>
<rect x="776" y="546" width="42" height="7" fill="#ffff00"/>
<rect x="818" y="546" width="28" height="7" fill="#d5ff00"/>
<rect x="846" y="546" width="35" height="7" fill="#80ff00"/>
<rect x="881" y="546" width="7" height="7" fill="#ffff00"/>
<rect x="888" y="546" width="7" height="7" fill="#80ff00"/>
<rect x="895" y="546" width="7" height="7" fill="#ffff00"/>
<rect x="902" y="546" width="7" height="7" fill="#80ff00"/>
<rect x="909" y="546" width="20" height="7" fill="#ffff00"/>
<rect x="929" y="546" width="35" height="7" fill="#80ff00"/>
<rect x="964" y="546" width="21" height="7" fill="#ffff00"/>
<rect x="707" y="553" width="7" height="7" fill="#ff5000"/>
<rect x="714" y="553" width="7" height="7" fill="#f00000"/>
<rect x="721" y="553" width="14" height="7" fill="#ff5000"/>
<rect x="735" y="553" width="7" height="7" fill="#ffff00"/>
<rect x="742" y="553" width="7" height="7" fill="#ffaa00"/>
<rect x="749" y="553" width="7" height="7" fill="#ffff00"/>
<rect x="756" y="553" width="14" height="7" fill="#ffaa00"/>
<rect x="770" y="553" width="48" height="7" fill="#ffff00"/>
<rect x="818" y="553" width="28" height="7" fill="#d5ff00"/>
<rect x="846" y="553" width="35" height="7" fill="#80ff00"/>
<rect x="881" y="553" width="14" height="7" fill="#ffff00"/>
<rect x="895" y="553" width="21" height="7" fill="#80ff00"/>
<rect x="916" y="553" width="6" height="7" fill="#ffff00"/>
<rect x="922" y="553" width="49" height="7" fill="#80ff00"/>
<rect x="971" y="553" width="14" height="7" fill="#ffff00"/>
<rect x="707" y="560" width="14" height="7" fill="#f00000"/>
<rect x="721" y="560" width="14" height="7" fill="#ff5000"/>
<rect x="735" y="560" width="7" height="7" fill="#ffff00"/>
<rect x="742" y="560" width="7" height="7" fill="#ffaa00"/>
<rect x="749" y="560" width="21" height="7" fill="#ffff00"/>
<rect x="770" y="560" width="6" height="7" fill="#ffaa00"/>
<rect x="776" y="560" width="42" height="7" fill="#ffff00"/>
<rect x="818" y="560" width="14" height="7" fill="#d5ff00"/>
<rect x="832" y="560" width="14" height="7" fill="#c0ff00"/>
<rect x="846" y="560" width="42" height="7" fill="#80ff00"/>
<rect x="888" y="560" width="28" height="7" fill="#aaff00"/>
<rect x="916" y="560" width="13" height="7" fill="#80ff00"/>
<rect x="929" y="560" width="7" height="7" fill="#008800"/>
<rect x="936" y="560" width="35" height="7" fill="#80ff00"/>
<rect x="971" y="560" width="14" height="7" fill="#ffff00"/>
<rect x="707" y="567" width="14" height="7" fill="#f00000"/>
<rect x="721" y="567" width="7" height="7" fill="#ffaa00"/>
<rect x="728" y="567" width="7" height="7" fill="#ff5000"/>
<rect x="735" y="567" width="21" height="7" fill="#ffff00"/>
<rect x="756" y="567" width="14" height="7" fill="#ffaa00"/>
<rect x="770" y="567" width="48" height="7" fill="#ffff00"/>
<rect x="818" y="567" width="14" height="7" fill="#d5ff00"/>
<rect x="832" y="567" width="14" height="7" fill="#c0ff00"/>
<rect x="846" y="567" width="42" height="7" fill="#80ff00"/>
<rect x="888" y="567" width="28" height="7" fill="#aaff00"/>
<rect x="916" y="567" width="13" height="7" fill="#80ff00"/>
<rect x="929" y="567" width="7" height="7" fill="#008800"/>
<rect x="936" y="567" width="7" height="7" fill="#80ff00"/>
<rect x="943" y="567" width="7" height="7" fill="#008800"/>
<rect x="950" y="567" width="21" height="7" fill="#80ff00"/>
<rect x="971" y="567" width="14" height="7" fill="#ffff00"/>
<rect x="707" y="574" width="14" height="7" fill="#f00000"/>
<rect x="721" y="574" width="21" height="7" fill="#ffaa00"/>
<rect x="742" y="574" width="7" height="7" fill="#ff5000"/>
<rect x="749" y="574" width="7" height="7" fill="#ffaa00"/>
<rect x="756" y="574" width="14" height="7" fill="#ffff00"/>
<rect x="770" y="574" width="6" height="7" fill="#ffaa00"/>
<rect x="776" y="574" width="14" height="7" fill="#ffe300"/>
<rect x="790" y="574" width="28" height="7" fill="#ffff00"/>
<rect x="818" y="574" width="14" height="7" fill="#d5ff00"/>
<rect x="832" y="574" width="14" height="7" fill="#aaff00"/>
<rect x="846" y="574" width="56" height="7" fill="#80ff00"/>
<rect x="902" y="574" width="14" height="7" fill="#55d700"/>
<rect x="916" y="574" width="20" height="7" fill="#80ff00"/>
<rect x="936" y="574" width="14" height="7" fill="#008800"/>
<rect x="950" y="574" width="21" height="7" fill="#80ff00"/>
<rect x="971" y="574" width="14" height="7" fill="#ffff00"/>
<rect x="707" y="581" width="14" height="7" fill="#f00000"/>
<rect x="721" y="581" width="7" height="7" fill="#ff5000"/>
<rect x="728" y="581" width="7" height="7" fill="#ffaa00"/>
<rect x="735" y="581" width="7" height="7" fill="#ffff00"/>
<rect x="742" y="581" width="7" height="7" fill="#ff5000"/>
<rect x="749" y="581" width="7" height="7" fill="#ffff00"/>
<rect x="756" y="581" width="7" height="7" fill="#ffaa00"/>
<rect x="763" y="581" width="7" height="7" fill="#ffff00"/>
<rect x="770" y="581" width="6" height="7" fill="#ffaa00"/>
<rect x="776" y="581" width="14" height="7" fill="#ffe300"/>
<rect x="790" y="581" width="28" height="7" fill="#ffff00"/>
<rect x="818" y="581" width="14" height="7" fill="#d5ff00"/>
<rect x="832" y="581" width="14" height="7" fill="#aaff00"/>
<rect x="846" y="581" width="56" height="7" fill="#80ff00"/>
<rect x="902" y="581" width="14" height="7" fill="#55d700"/>
<rect x="916" y="581" width="13" height="7" fill="#80ff00"/>
<rect x="929" y="581" width="28" height="7" fill="#008800"/>
<rect x="957" y="581" width="14" height="7" fill="#80ff00"/>
<rect x="971" y="581" width="14" height="7" fill="#ffff00"/>
<rect x="707" y="588" width="14" height="7" fill="#f00000"/>
<rect x="721" y="588" width="28" height="7" fill="#ffaa00"/>
<rect x="749" y="588" width="7" height="7" fill="#ffff00"/>
<rect x="756" y="588" width="7" height="7" fill="#ffaa00"/>
<rect x="763" y="588" width="13" height="7" fill="#ffff00"/>
<rect x="776" y="588" width="14" height="7" fill="#ffd400"/>
<rect x="790" y="588" width="14" height="7" fill="#d5ff00"/>
<rect x="804" y="588" width="28" height="7" fill="#ffff00"/>
<rect x="832" y="588" width="70" height="7" fill="#80ff00"/>
<rect x="902" y="588" width="14" height="7" fill="#55d700"/>
<rect x="916" y="588" width="13" height="7" fill="#80ff00"/>
<rect x="929" y="588" width="42" height="7" fill="#008800"/>
<rect x="971" y="588" width="14" height="7" fill="#ffff00"/>
<rect x="707" y="595" width="7" height="7" fill="#ff5000"/>
<rect x="714" y="595" width="7" height="7" fill="#f00000"/>
<rect x="721" y="595" width="7" height="7" fill="#ffaa00"/>
<rect x="728" y="595" width="7" height="7" fill="#ff5000"/>
<rect x="735" y="595" width="21" height="7" fill="#ffaa00"/>
<rect x="756" y="595" width="7" height="7" fill="#ffff00"/>
<rect x="763" y="595" width="7" height="7" fill="#ffaa00"/>
<rect x="770" y="595" width="6" height="7" fill="#ffff00"/>
<rect x="776" y="595" width="14" height="7" fill="#ffd400"/>
<rect x="790" y="595" width="14" height="7" fill="#d5ff00"/>
<rect x="804" y="595" width="28" height="7" fill="#ffff00"/>
<rect x="832" y="595" width="70" height="7" fill="#80ff00"/>
<rect x="902" y="595" width="14" height="7" fill="#55d700"/>
<rect x="916" y="595" width="13" height="7" fill="#80ff00"/>
<rect x="929" y="595" width="28" height="7" fill="#008800"/>
<rect x="957" y="595" width="7" height="7" fill="#80ff00"/>
<rect x="964" y="595" width="7" height="7" fill="#008800"/>
<rect x="971" y="595" width="14" height="7" fill="#ffff00"/>
<rect x="707" y="602" width="14" height="7" fill="#ff5000"/>
<rect x="721" y="602" width="7" height="7" fill="#ffaa00"/>
<rect x="728" y="602" width="7" height="7" fill="#ff5000"/>
<rect x="735" y="602" width="14" height="7" fill="#ffaa00"/>
<rect x="749" y="602" width="21" height="7" fill="#ffff00"/>
<rect x="770" y="602" width="6" height="7" fill="#ffaa00"/>
<rect x="776" y="602" width="14" height="7" fill="#ffd400"/>
<rect x="790" y="602" width="14" height="7" fill="#ffe300"/>
<rect x="804" y="602" width="14" height="7" fill="#ffff00"/>
<rect x="818" y="602" width="14" height="7" fill="#d5ff00"/>
<rect x="832" y="602" width="14" height="7" fill="#aaff00"/>
<rect x="846" y="602" width="56" height="7" fill="#80ff00"/>
<rect x="902" y="602" width="14" height="7" fill="#40c400"/>
<rect x="916" y="602" width="13" height="7" fill="#80ff00"/>
<rect x="929" y="602" width="28" height="7" fill="#008800"/>
<rect x="957" y="602" width="14" height="7" fill="#80ff00"/>
<rect x="971" y="602" width="14" height="7" fill="#ffff00"/>
<rect x="707" y="609" width="21" height="7" fill="#ff5000"/>
<rect x="728" y="609" width="14" height="7" fill="#ffaa00"/>
<rect x="742" y="609" width="7" height="7" fill="#ff5000"/>
<rect x="749" y="609" width="27" height="7" fill="#ffff00"/>
<rect x="776" y="609" width="14" height="7" fill="#ffd400"/>
<rect x="790" y="609" width="14" height="7" fill="#ffe300"/>
<rect x="804" y="609" width="14" height="7" fill="#ffff00"/>
<rect x="818" y="609" width="14" height="7" fill="#d5ff00"/>
<rect x="832" y="609" width="14" height="7" fill="#aaff00"/>
<rect x="846" y="609" width="56" height="7" fill="#80ff00"/>
<rect x="902" y="609" width="14" height="7" fill="#40c400"/>
<rect x="916" y="609" width="20" height="7" fill="#80ff00"/>
<rect x="936" y="609" width="21" height="7" fill="#008800"/>
<rect x="957" y="609" width="21" height="7" fill="#80ff00"/>
<rect x="978" y="609" width="7" height="7" fill="#ffff00"/>
<rect x="707" y="616" width="21" height="7" fill="#ff5000"/>
<rect x="728" y="616" width="7" height="7" fill="#ffaa00"/>
<rect x="735" y="616" width="14" height="7" fill="#ff5000"/>
<rect x="749" y="616" width="7" height="7" fill="#ffaa00"/>
<rect x="756" y="616" width="20" height="7" fill="#ffff00"/>
<rect x="776" y="616" width="14" height="7" fill="#ffc600"/>
<rect x="790" y="616" width="14" height="7" fill="#ffd400"/>
<rect x="804" y="616" width="14" height="7" fill="#ffff00"/>
<rect x="818" y="616" width="14" height="7" fill="#d5ff00"/>
<rect x="832" y="616" width="14" height="7" fill="#c0ff00"/>
<rect x="846" y="616" width="56" height="7" fill="#80ff00"/>
<rect x="902" y="616" width="14" height="7" fill="#2bb000"/>
<rect x="916" y="616" width="13" height="7" fill="#008800"/>
<rect x="929" y="616" width="7" height="7" fill="#80ff00"/>
<rect x="936" y="616" width="14" height="7" fill="#008800"/>
<rect x="950" y="616" width="14" height="7" fill="#00ffff"/>
<rect x="964" y="616" width="7" height="7" fill="#008800"/>
<rect x="971" y="616" width="7" height="7" fill="#80ff00"/>
<rect x="978" y="616" width="7" height="7" fill="#ffff00"/>
<rect x="707" y="623" width="21" height="7" fill="#ff5000"/>
<rect x="728" y="623" width="7" height="7" fill="#ffaa00"/>
<rect x="735" y="623" width="14" height="7" fill="#ff5000"/>
<rect x="749" y="623" width="27" height="7" fill="#ffff00"/>
<rect x="776" y="623" width="14" height="7" fill="#ffc600"/>
<rect x="790" y="623" width="14" height="7" fill="#ffd400"/>
<rect x="804" y="623" width="14" height="7" fill="#ffff00"/>
<rect x="818" y="623" width="14" height="7" fill="#d5ff00"/>
<rect x="832" y="623" width="14" height="7" fill="#c0ff00"/>
<rect x="846" y="623" width="56" height="7" fill="#80ff00"/>
<rect x="902" y="623" width="14" height="7" fill="#2bb000"/>
<rect x="916" y="623" width="27" height="7" fill="#008800"/>
<rect x="943" y="623" width="21" height="7" fill="#00ffff"/>
<rect x="964" y="623" width="14" height="7" fill="#008800"/>
<rect x="978" y="623" width="7" height="7" fill="#ffff00"/>
<rect x="864" y="46" width="90" height="1" fill="#000"/>
<rect x="57" y="78" width="17" height="32" fill="#660000"/><rect x="57" y="110" width="17" height="32" fill="#f00000"/><rect x="57" y="142" width="17" height="32" fill="#ff5000"/><rect x="57" y="174" width="17" height="32" fill="#ffaa00"/><rect x="57" y="206" width="17" height="32" fill="#ffff00"/><rect x="57" y="238" width="17" height="32" fill="#80ff00"/><rect x="57" y="270" width="17" height="32" fill="#008800"/><rect x="57" y="302" width="17" height="32" fill="#00ffff"/><rect x="57" y="334" width="17" height="32" fill="#0080ff"/><rect x="57" y="366" width="17" height="32" fill="#0000ff"/><rect x="57" y="398" width="17" height="32" fill="#8a2be2"/>
<rect x="56.5" y="77.5" width="18" height="353" fill="none" stroke="#fff" stroke-width="1"/>
<rect x="152" y="46" width="1" height="585" fill="#00ffff"/>
<rect x="291" y="46" width="1" height="585" fill="#00ffff"/>
<rect x="430" y="46" width="1" height="585" fill="#00ffff"/>
<rect x="568" y="46" width="1" height="585" fill="#00ffff"/>
<rect x="707" y="46" width="1" height="585" fill="#00ffff"/>
<rect x="985" y="46" width="1" height="585" fill="#00ffff"/>
<rect x="846" y="46" width="1" height="21" fill="#00ffff"/>
<rect x="846" y="79" width="1" height="127" fill="#00ffff"/>
<rect x="846" y="218" width="1" height="127" fill="#00ffff"/>
<rect x="846" y="357" width="1" height="127" fill="#00ffff"/>
<rect x="846" y="496" width="1" height="135" fill="#00ffff"/>
<rect x="68" y="74" width="768" height="1" fill="#00ffff"/>
<rect x="865" y="74" width="121" height="1" fill="#00ffff"/>
<rect x="68" y="213" width="768" height="1" fill="#00ffff"/>
<rect x="865" y="213" width="121" height="1" fill="#00ffff"/>
<rect x="68" y="352" width="765" height="1" fill="#00ffff"/>
<rect x="868" y="352" width="118" height="1" fill="#00ffff"/>
<rect x="68" y="491" width="765" height="1" fill="#00ffff"/>
<rect x="868" y="491" width="118" height="1" fill="#00ffff"/>
<rect x="68" y="630" width="918" height="1" fill="#00ffff"/>

<polyline points="838.5,4.3 845.4,10.8 853.8,18.5 859.2,22.8 864.6,27.7 866.2,30.8 874.6,39.2 875.4,41.5 880,46.2 885.4,50.8 891.5,57.7 896.2,61.5 897.7,66.2 902.3,73.8 906.2,83 908.5,88 906.9,91.5 913,100 926.2,101.5 929.5,99.2 926,102.3 914.6,103.8 911.5,106.2 913,113 917,120 924.6,127.7 926.2,137 930.8,146 937,160 940.8,168.5 941.5,177.7 938.5,179.2 930,186.9 933,193 936.2,203.8 940,213 946.2,223.8 950.8,231.5 953.8,240 953,245.4 952.3,256.2 952.3,263.8 949.2,273.8 943.8,283 936.2,285.4 928.5,293 929.2,296.2 918.5,307 917,310.8 917,317.7 912.3,329.2 911.5,340 906.9,352.3 906.2,356.2 903.8,366.9 895.4,375.4 896.2,386.9 897.7,400.8 895.4,411.5 894.6,426.9 896.9,436.2 903.8,449.2 914.6,460 919.2,467.7 924.6,476.9 930,490 935.4,496.9 936.9,504.6 940.8,512.3 946.9,523 953,530.8 960.9,542.9 969.2,552.1 972.9,565 970.1,576.1 971,594.6 972.9,609.3 978.4,622.3 981.2,630.6 980.3,637 982.1,642.5 981.2,648" fill="none" stroke="#fff" stroke-width="1.2" shape-rendering="geometricPrecision"/>
</svg>
<div class="t" style="left:383px;top:2px;font-size:17px;color:#fff;transform:scaleX(0.99);transform-origin:0 0;">BROADBAND ALBEDO</div>
<div class="t" style="left:370px;top:22px;font-size:16px;color:#fff;transform:scaleX(0.888);transform-origin:0 0;">Oct 13, 2016 05:15 UTC</div>
<div class="t" style="left:9px;top:17px;font-size:11.6px;color:#ffbb00;transform:scaleX(0.93);transform-origin:0 0;">NASA Langley (M04.0)</div>
<div class="t m" style="left:11px;top:62px;font-size:11.6px;color:#ffaa77;">BBALB(%)</div>
<div class="t" style="left:30px;top:72px;font-size:11.6px;color:#ffaa77;letter-spacing:0.55px;">100</div>
<div class="t" style="left:37px;top:104px;font-size:11.6px;color:#ffaa77;letter-spacing:0.55px;">80</div>
<div class="t" style="left:37px;top:136px;font-size:11.6px;color:#ffaa77;letter-spacing:0.55px;">70</div>
<div class="t" style="left:37px;top:168px;font-size:11.6px;color:#ffaa77;letter-spacing:0.55px;">60</div>
<div class="t" style="left:37px;top:200px;font-size:11.6px;color:#ffaa77;letter-spacing:0.55px;">50</div>
<div class="t" style="left:37px;top:232px;font-size:11.6px;color:#ffaa77;letter-spacing:0.55px;">40</div>
<div class="t" style="left:37px;top:264px;font-size:11.6px;color:#ffaa77;letter-spacing:0.55px;">30</div>
<div class="t" style="left:37px;top:296px;font-size:11.6px;color:#ffaa77;letter-spacing:0.55px;">25</div>
<div class="t" style="left:37px;top:328px;font-size:11.6px;color:#ffaa77;letter-spacing:0.55px;">20</div>
<div class="t" style="left:37px;top:360px;font-size:11.6px;color:#ffaa77;letter-spacing:0.55px;">15</div>
<div class="t" style="left:37px;top:392px;font-size:11.6px;color:#ffaa77;letter-spacing:0.55px;">10</div>
<div class="t" style="left:44px;top:424px;font-size:11.6px;color:#ffaa77;letter-spacing:0.55px;">0</div>
<div class="t" style="left:145px;top:35px;font-size:11.6px;color:#ff0000;letter-spacing:0.9px;">15W</div>
<div class="t" style="left:282px;top:35px;font-size:11.6px;color:#ff0000;letter-spacing:0.9px;">10W</div>
<div class="t" style="left:428px;top:35px;font-size:11.6px;color:#ff0000;letter-spacing:0.9px;">5W</div>
<div class="t" style="left:562px;top:35px;font-size:11.6px;color:#ff0000;letter-spacing:0.9px;">0</div>
<div class="t" style="left:707px;top:35px;font-size:11.6px;color:#ff0000;letter-spacing:0.9px;">5E</div>
<div class="t" style="left:839px;top:35px;font-size:11.6px;color:#ff0000;letter-spacing:0.9px;">10E</div>
<div class="t" style="left:846px;top:67px;font-size:11.6px;color:#ff0000;letter-spacing:0.9px;">5S</div>
<div class="t" style="left:839px;top:206px;font-size:11.6px;color:#ff0000;letter-spacing:0.9px;">10S</div>
<div class="t" style="left:841px;top:345px;font-size:11.6px;color:#ff0000;letter-spacing:0.9px;">15S</div>
<div class="t" style="left:840px;top:484px;font-size:11.6px;color:#ff0000;letter-spacing:0.9px;">20S</div>
<div class="t m" style="left:251px;top:638px;font-size:12px;color:#fff;letter-spacing:1.8px;">MT10  BROADBAND ALBEDO   OCT 13, 2016 05:15Z   NASA LARC</div>
</body></html>
